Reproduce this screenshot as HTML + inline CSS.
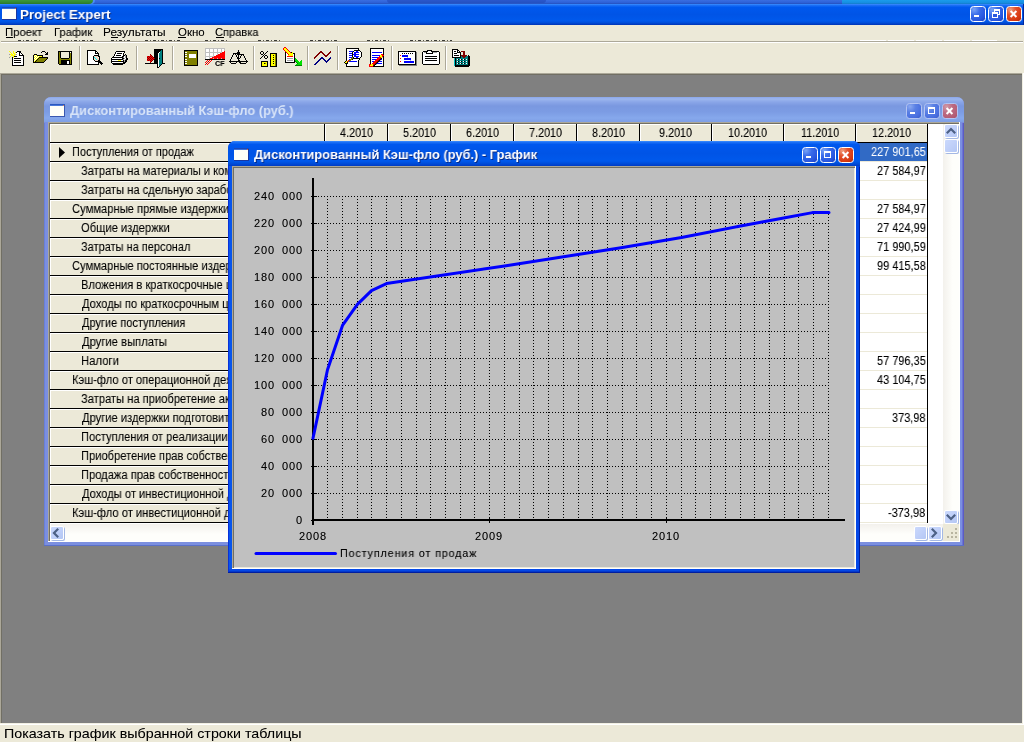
<!DOCTYPE html>
<html lang="ru"><head><meta charset="utf-8"><title>Project Expert</title>
<style>
html,body{margin:0;padding:0;}
body{width:1024px;height:742px;overflow:hidden;background:#ece9d8;position:relative;font-family:"Liberation Sans",sans-serif;font-size:11px;}
body div, body span.t, body svg{position:absolute;}
span.t{white-space:pre;display:block;transform-origin:0 0;will-change:transform;}
</style></head><body>
<div style="left:0px;top:0px;width:1024px;height:4px;background:linear-gradient(#3a6ee0,#2f62d8 60%,#2450bc);"></div>
<div style="left:387px;top:0px;width:159px;height:3px;background:linear-gradient(#2a58cc,#2450c0);border-radius:0 0 3px 3px;"></div>
<div style="left:842px;top:0px;width:182px;height:4px;background:linear-gradient(#1a9cec,#168ee0 70%,#1478c8);"></div>
<div style="left:0px;top:0px;width:95px;height:4px;background:#4a8cf8;border-radius:0 0 5px 0;"></div>
<div style="left:0px;top:0px;width:93px;height:4px;background:linear-gradient(#3c983c,#348c34 50%,#2a782a);border-radius:0 0 5px 0;"></div>
<div style="left:0px;top:4px;width:1024px;height:21px;background:linear-gradient(to bottom,#3d8fff 0%,#1a6ef5 7%,#0058ee 16%,#0054e6 50%,#0059ec 80%,#0050dc 88%,#0040c8 95%,#0034b4 100%);"></div>
<div style="left:1023px;top:4px;width:1px;height:21px;background:#0028a0;"></div>
<svg style="left:2px;top:7px" width="15" height="13" viewBox="0 0 15 13"><rect width="15" height="13" fill="#fffff8"/><rect width="15" height="2" fill="#3a6fd8"/><rect width="15" height="1" fill="#1a48b8"/><rect x="13" y="1" width="1" height="1" fill="#e06030"/><rect y="12" width="15" height="1" fill="#1a38a0"/><rect x="14" y="1" width="1" height="12" fill="#1a38a0"/></svg>
<span class="t" style="left:20.25px;top:6.6px;font-size:13.5px;line-height:16px;color:#fff;font-family:'Liberation Sans',sans-serif;font-weight:bold;transform:scaleX(0.9889);text-shadow:1px 1px 0 #0a2a80;">Project Expert</span>
<div style="left:970px;top:6px;width:14px;height:14px;background:radial-gradient(circle at 22% 18%,#7aa4f6 0%,#3a6cea 35%,#2a58e0 70%,#1c40c4 100%);border:1px solid #fff;border-radius:3.5px;"></div>
<div style="left:974px;top:15px;width:5px;height:2px;background:#fff;"></div>
<div style="left:988px;top:6px;width:14px;height:14px;background:radial-gradient(circle at 22% 18%,#7aa4f6 0%,#3a6cea 35%,#2a58e0 70%,#1c40c4 100%);border:1px solid #fff;border-radius:3.5px;"></div>
<div style="left:994px;top:9px;width:4px;height:3px;background:transparent;border:1px solid #fff;border-top-width:2px;"></div>
<div style="left:992px;top:12px;width:4px;height:3px;background:#2a58e0;border:1px solid #fff;border-top-width:2px;"></div>
<div style="left:1006px;top:6px;width:14px;height:14px;background:radial-gradient(circle at 25% 20%,#f0a080 0%,#e2502a 35%,#d83a12 70%,#b82a08 100%);border:1px solid #fff;border-radius:3.5px;"></div>
<svg style="left:1006px;top:5.5px" width="16" height="16" viewBox="0 0 16 16"><path d="M4.6 5L10.4 11M10.4 5L4.6 11" stroke="#fff" stroke-width="2" stroke-linecap="butt" fill="none"/></svg>
<div style="left:0px;top:25px;width:1024px;height:17px;background:#ece9d8;"></div>
<span class="t" style="left:4.91px;top:25.2px;font-size:11.5px;line-height:14px;color:#000;font-family:'Liberation Sans',sans-serif;text-shadow:0 0 0 rgba(0,0,0,.3);transform:scaleX(0.9838);">Проект</span>
<div style="left:6px;top:37px;width:7px;height:1px;background:#000;"></div>
<span class="t" style="left:54.24px;top:25.2px;font-size:11.5px;line-height:14px;color:#000;font-family:'Liberation Sans',sans-serif;text-shadow:0 0 0 rgba(0,0,0,.3);transform:scaleX(0.9763);">График</span>
<span class="t" style="left:103.44px;top:25.2px;font-size:11.5px;line-height:14px;color:#000;font-family:'Liberation Sans',sans-serif;text-shadow:0 0 0 rgba(0,0,0,.3);transform:scaleX(1.0339);">Результаты</span>
<div style="left:111px;top:37px;width:7px;height:1px;background:#000;"></div>
<span class="t" style="left:177.85px;top:25.2px;font-size:11.5px;line-height:14px;color:#000;font-family:'Liberation Sans',sans-serif;text-shadow:0 0 0 rgba(0,0,0,.3);transform:scaleX(0.9923);">Окно</span>
<div style="left:178px;top:37px;width:8px;height:1px;background:#000;"></div>
<span class="t" style="left:215.04px;top:25.2px;font-size:11.5px;line-height:14px;color:#000;font-family:'Liberation Sans',sans-serif;text-shadow:0 0 0 rgba(0,0,0,.3);transform:scaleX(0.9636);">Справка</span>
<div style="left:216px;top:37px;width:8px;height:1px;background:#000;"></div>
<div style="left:1px;top:41px;width:1022px;height:1px;background:#aca899;"></div>
<div style="left:1px;top:42px;width:1022px;height:1px;background:#fff;"></div>
<div style="left:18px;top:40px;width:23px;height:1px;background:repeating-linear-gradient(90deg,#3a3a36 0,#3a3a36 3px,transparent 3px,transparent 5px,#55534c 5px,#55534c 6px,transparent 6px,transparent 8px);"></div>
<div style="left:58px;top:40px;width:35px;height:1px;background:repeating-linear-gradient(90deg,#3a3a36 0,#3a3a36 3px,transparent 3px,transparent 5px,#55534c 5px,#55534c 6px,transparent 6px,transparent 8px);"></div>
<div style="left:111px;top:40px;width:19px;height:1px;background:repeating-linear-gradient(90deg,#3a3a36 0,#3a3a36 3px,transparent 3px,transparent 5px,#55534c 5px,#55534c 6px,transparent 6px,transparent 8px);"></div>
<div style="left:145px;top:40px;width:35px;height:1px;background:repeating-linear-gradient(90deg,#3a3a36 0,#3a3a36 3px,transparent 3px,transparent 5px,#55534c 5px,#55534c 6px,transparent 6px,transparent 8px);"></div>
<div style="left:205px;top:40px;width:24px;height:1px;background:repeating-linear-gradient(90deg,#3a3a36 0,#3a3a36 3px,transparent 3px,transparent 5px,#55534c 5px,#55534c 6px,transparent 6px,transparent 8px);"></div>
<div style="left:258px;top:40px;width:22px;height:1px;background:repeating-linear-gradient(90deg,#3a3a36 0,#3a3a36 3px,transparent 3px,transparent 5px,#55534c 5px,#55534c 6px,transparent 6px,transparent 8px);"></div>
<div style="left:310px;top:40px;width:27px;height:1px;background:repeating-linear-gradient(90deg,#3a3a36 0,#3a3a36 3px,transparent 3px,transparent 5px,#55534c 5px,#55534c 6px,transparent 6px,transparent 8px);"></div>
<div style="left:367px;top:40px;width:23px;height:1px;background:repeating-linear-gradient(90deg,#3a3a36 0,#3a3a36 3px,transparent 3px,transparent 5px,#55534c 5px,#55534c 6px,transparent 6px,transparent 8px);"></div>
<div style="left:410px;top:40px;width:42px;height:1px;background:repeating-linear-gradient(90deg,#3a3a36 0,#3a3a36 3px,transparent 3px,transparent 5px,#55534c 5px,#55534c 6px,transparent 6px,transparent 8px);"></div>
<div style="left:860px;top:40px;width:137px;height:1px;background:repeating-linear-gradient(90deg,#fff 0,#fff 26px,transparent 26px,transparent 28px);"></div>
<div style="left:0px;top:43px;width:1024px;height:31px;background:#ece9d8;"></div>
<div style="left:0px;top:73px;width:1024px;height:652px;background:#fff;"></div>
<div style="left:0px;top:73px;width:1023px;height:651px;background:#f1efe2;"></div>
<div style="left:0px;top:73px;width:1022px;height:650px;background:#aca899;"></div>
<div style="left:1px;top:74px;width:1021px;height:649px;background:#716f64;"></div>
<div style="left:2px;top:75px;width:1020px;height:648px;background:#808080;"></div>
<div style="left:0px;top:725px;width:1024px;height:17px;background:#ece9d8;"></div>
<span class="t" style="left:3.84px;top:726px;font-size:13.5px;line-height:16px;color:#000;font-family:'Liberation Sans',sans-serif;text-shadow:0 0 0 rgba(0,0,0,.3);transform:scaleX(1.0575);">Показать график выбранной строки таблицы</span>
<div style="left:44px;top:97px;width:920px;height:449px;background:#7b8fe0;border-radius:7px 7px 0 0;"></div>
<div style="left:44px;top:97px;width:920px;height:25px;background:linear-gradient(to bottom,#8aa6ea 0%,#9cb6ee 8%,#8aa6e8 20%,#7a98e0 36%,#7c9ce4 60%,#86a8ec 84%,#7e9ee6 100%);border-radius:7px 7px 0 0;"></div>
<div style="left:44px;top:123px;width:1px;height:423px;background:#6a80d8;"></div>
<div style="left:962px;top:123px;width:1px;height:423px;background:#6c74d4;"></div>
<div style="left:963px;top:123px;width:1px;height:423px;background:#5a5cc4;"></div>
<div style="left:44px;top:545px;width:920px;height:1px;background:#5a70c8;"></div>
<svg style="left:50px;top:104px" width="15" height="13" viewBox="0 0 15 13"><rect width="15" height="13" fill="#fffff8"/><rect width="15" height="2" fill="#4a78d8"/><rect width="15" height="1" fill="#2a58c0"/><rect x="13" y="1" width="1" height="1" fill="#e08050"/><rect y="12" width="15" height="1" fill="#3a58b0"/><rect x="14" y="1" width="1" height="12" fill="#3a58b0"/></svg>
<span class="t" style="left:70.43px;top:103px;font-size:13.5px;line-height:16px;color:#d8e4f8;font-family:'Liberation Sans',sans-serif;font-weight:bold;transform:scaleX(0.9500);">Дисконтированный Кэш-фло (руб.)</span>
<div style="left:906px;top:103px;width:14px;height:14px;background:radial-gradient(circle at 22% 18%,#8aa8f0 0%,#5a80e4 35%,#4a70e0 70%,#3c5ecc 100%);border:1px solid #b4c4f2;border-radius:3.5px;"></div>
<div style="left:910px;top:112px;width:5px;height:2px;background:#fff;"></div>
<div style="left:924px;top:103px;width:14px;height:14px;background:radial-gradient(circle at 22% 18%,#8aa8f0 0%,#5a80e4 35%,#4a70e0 70%,#3c5ecc 100%);border:1px solid #b4c4f2;border-radius:3.5px;"></div>
<div style="left:928px;top:107px;width:5px;height:4px;background:transparent;border:1px solid #fff;border-top-width:2px;"></div>
<div style="left:942px;top:103px;width:14px;height:14px;background:radial-gradient(circle at 25% 20%,#d09aa8 0%,#bc6a82 40%,#b45e76 75%,#a85068 100%);border:1px solid #b4c4f2;border-radius:3.5px;"></div>
<svg style="left:942px;top:102.5px" width="16" height="16" viewBox="0 0 16 16"><path d="M4.6 5L10.4 11M10.4 5L4.6 11" stroke="#fff" stroke-width="2" stroke-linecap="butt" fill="none"/></svg>
<div style="left:48px;top:122px;width:912px;height:420px;background:#fff;"></div>
<div style="left:48px;top:122px;width:911px;height:1px;background:#aca899;"></div>
<div style="left:48px;top:122px;width:1px;height:419px;background:#aca899;"></div>
<div style="left:49px;top:123px;width:910px;height:1px;background:#716f64;"></div>
<div style="left:49px;top:123px;width:1px;height:418px;background:#716f64;"></div>
<div style="left:50px;top:124px;width:878px;height:18px;background:#ece9d8;"></div>
<div style="left:50px;top:124px;width:274px;height:399px;background:#ece9d8;"></div>
<div style="left:50px;top:124px;width:877px;height:1px;background:#fff;"></div>
<div style="left:50px;top:124px;width:1px;height:399px;background:#fff;"></div>
<div style="left:50px;top:142px;width:878px;height:1px;background:#000;"></div>
<div style="left:324px;top:124px;width:1px;height:18px;background:#000;"></div>
<div style="left:325px;top:124px;width:1px;height:18px;background:#fff;"></div>
<div style="left:387px;top:124px;width:1px;height:18px;background:#000;"></div>
<div style="left:388px;top:124px;width:1px;height:18px;background:#fff;"></div>
<div style="left:450px;top:124px;width:1px;height:18px;background:#000;"></div>
<div style="left:451px;top:124px;width:1px;height:18px;background:#fff;"></div>
<div style="left:513px;top:124px;width:1px;height:18px;background:#000;"></div>
<div style="left:514px;top:124px;width:1px;height:18px;background:#fff;"></div>
<div style="left:576px;top:124px;width:1px;height:18px;background:#000;"></div>
<div style="left:577px;top:124px;width:1px;height:18px;background:#fff;"></div>
<div style="left:639px;top:124px;width:1px;height:18px;background:#000;"></div>
<div style="left:640px;top:124px;width:1px;height:18px;background:#fff;"></div>
<div style="left:711px;top:124px;width:1px;height:18px;background:#000;"></div>
<div style="left:712px;top:124px;width:1px;height:18px;background:#fff;"></div>
<div style="left:783px;top:124px;width:1px;height:18px;background:#000;"></div>
<div style="left:784px;top:124px;width:1px;height:18px;background:#fff;"></div>
<div style="left:855px;top:124px;width:1px;height:18px;background:#000;"></div>
<div style="left:856px;top:124px;width:1px;height:18px;background:#fff;"></div>
<div style="left:927px;top:124px;width:1px;height:400px;background:#000;"></div>
<div style="left:324px;top:142px;width:1px;height:382px;background:#000;"></div>
<span class="t" style="left:340px;top:126px;font-size:12.5px;line-height:14px;color:#000;font-family:'Liberation Sans',sans-serif;text-shadow:0 0 0 rgba(0,0,0,.3);transform:scaleX(0.8650);">4.2010</span>
<span class="t" style="left:402.69px;top:126px;font-size:12.5px;line-height:14px;color:#000;font-family:'Liberation Sans',sans-serif;text-shadow:0 0 0 rgba(0,0,0,.3);transform:scaleX(0.8650);">5.2010</span>
<span class="t" style="left:465.69px;top:126px;font-size:12.5px;line-height:14px;color:#000;font-family:'Liberation Sans',sans-serif;text-shadow:0 0 0 rgba(0,0,0,.3);transform:scaleX(0.8650);">6.2010</span>
<span class="t" style="left:528.69px;top:126px;font-size:12.5px;line-height:14px;color:#000;font-family:'Liberation Sans',sans-serif;text-shadow:0 0 0 rgba(0,0,0,.3);transform:scaleX(0.8650);">7.2010</span>
<span class="t" style="left:592.21px;top:126px;font-size:12.5px;line-height:14px;color:#000;font-family:'Liberation Sans',sans-serif;text-shadow:0 0 0 rgba(0,0,0,.3);transform:scaleX(0.8650);">8.2010</span>
<span class="t" style="left:658.98px;top:126px;font-size:12.5px;line-height:14px;color:#000;font-family:'Liberation Sans',sans-serif;text-shadow:0 0 0 rgba(0,0,0,.3);transform:scaleX(0.8650);">9.2010</span>
<span class="t" style="left:727.75px;top:126px;font-size:12.5px;line-height:14px;color:#000;font-family:'Liberation Sans',sans-serif;text-shadow:0 0 0 rgba(0,0,0,.3);transform:scaleX(0.8650);">10.2010</span>
<span class="t" style="left:800.54px;top:126px;font-size:12.5px;line-height:14px;color:#000;font-family:'Liberation Sans',sans-serif;text-shadow:0 0 0 rgba(0,0,0,.3);transform:scaleX(0.8650);">11.2010</span>
<span class="t" style="left:871.75px;top:126px;font-size:12.5px;line-height:14px;color:#000;font-family:'Liberation Sans',sans-serif;text-shadow:0 0 0 rgba(0,0,0,.3);transform:scaleX(0.8650);">12.2010</span>
<div style="left:50px;top:161px;width:274px;height:1px;background:#000;"></div>
<div style="left:50px;top:143px;width:274px;height:1px;background:#fff;"></div>
<div style="left:325px;top:161px;width:602px;height:1px;background:#ece9d8;"></div>
<div style="left:856px;top:143px;width:71px;height:18px;background:#316ac5;"></div>
<svg style="left:59px;top:147px" width="6" height="11" viewBox="0 0 6 11"><path d="M0 0L6 5.5L0 11Z" fill="#000"/></svg>
<span class="t" style="left:71.95px;top:145px;font-size:12.5px;line-height:14px;color:#000;font-family:'Liberation Sans',sans-serif;text-shadow:0 0 0 rgba(0,0,0,.3);transform:scaleX(0.8803);">Поступления от продаж</span>
<span class="t" style="left:870.98px;top:145px;font-size:12.5px;line-height:14px;color:#fff;font-family:'Liberation Sans',sans-serif;transform:scaleX(0.8770);">227 901,65</span>
<div style="left:50px;top:180px;width:274px;height:1px;background:#000;"></div>
<div style="left:50px;top:162px;width:274px;height:1px;background:#fff;"></div>
<div style="left:325px;top:180px;width:602px;height:1px;background:#ece9d8;"></div>
<span class="t" style="left:81.18px;top:164px;font-size:12.5px;line-height:14px;color:#000;font-family:'Liberation Sans',sans-serif;text-shadow:0 0 0 rgba(0,0,0,.3);transform:scaleX(0.8930);">Затраты на материалы и комплектующие</span>
<span class="t" style="left:876.62px;top:164px;font-size:12.5px;line-height:14px;color:#000;font-family:'Liberation Sans',sans-serif;text-shadow:0 0 0 rgba(0,0,0,.3);transform:scaleX(0.8770);">27 584,97</span>
<div style="left:50px;top:199px;width:274px;height:1px;background:#000;"></div>
<div style="left:50px;top:181px;width:274px;height:1px;background:#fff;"></div>
<div style="left:325px;top:199px;width:602px;height:1px;background:#ece9d8;"></div>
<span class="t" style="left:81.18px;top:183px;font-size:12.5px;line-height:14px;color:#000;font-family:'Liberation Sans',sans-serif;text-shadow:0 0 0 rgba(0,0,0,.3);transform:scaleX(0.8930);">Затраты на сдельную заработную плату</span>
<div style="left:50px;top:218px;width:274px;height:1px;background:#000;"></div>
<div style="left:50px;top:200px;width:274px;height:1px;background:#fff;"></div>
<div style="left:325px;top:218px;width:602px;height:1px;background:#ece9d8;"></div>
<span class="t" style="left:71.52px;top:202px;font-size:12.5px;line-height:14px;color:#000;font-family:'Liberation Sans',sans-serif;text-shadow:0 0 0 rgba(0,0,0,.3);transform:scaleX(0.8971);">Суммарные прямые издержки</span>
<span class="t" style="left:876.62px;top:202px;font-size:12.5px;line-height:14px;color:#000;font-family:'Liberation Sans',sans-serif;text-shadow:0 0 0 rgba(0,0,0,.3);transform:scaleX(0.8770);">27 584,97</span>
<div style="left:50px;top:237px;width:274px;height:1px;background:#000;"></div>
<div style="left:50px;top:219px;width:274px;height:1px;background:#fff;"></div>
<div style="left:325px;top:237px;width:602px;height:1px;background:#ece9d8;"></div>
<span class="t" style="left:81.16px;top:221px;font-size:12.5px;line-height:14px;color:#000;font-family:'Liberation Sans',sans-serif;text-shadow:0 0 0 rgba(0,0,0,.3);transform:scaleX(0.8969);">Общие издержки</span>
<span class="t" style="left:876.62px;top:221px;font-size:12.5px;line-height:14px;color:#000;font-family:'Liberation Sans',sans-serif;text-shadow:0 0 0 rgba(0,0,0,.3);transform:scaleX(0.8770);">27 424,99</span>
<div style="left:50px;top:256px;width:274px;height:1px;background:#000;"></div>
<div style="left:50px;top:238px;width:274px;height:1px;background:#fff;"></div>
<div style="left:325px;top:256px;width:602px;height:1px;background:#ece9d8;"></div>
<span class="t" style="left:81.25px;top:240px;font-size:12.5px;line-height:14px;color:#000;font-family:'Liberation Sans',sans-serif;text-shadow:0 0 0 rgba(0,0,0,.3);transform:scaleX(0.8805);">Затраты на персонал</span>
<span class="t" style="left:876.62px;top:240px;font-size:12.5px;line-height:14px;color:#000;font-family:'Liberation Sans',sans-serif;text-shadow:0 0 0 rgba(0,0,0,.3);transform:scaleX(0.8770);">71 990,59</span>
<div style="left:50px;top:275px;width:274px;height:1px;background:#000;"></div>
<div style="left:50px;top:257px;width:274px;height:1px;background:#fff;"></div>
<div style="left:325px;top:275px;width:602px;height:1px;background:#ece9d8;"></div>
<span class="t" style="left:71.54px;top:259px;font-size:12.5px;line-height:14px;color:#000;font-family:'Liberation Sans',sans-serif;text-shadow:0 0 0 rgba(0,0,0,.3);transform:scaleX(0.8930);">Суммарные постоянные издержки</span>
<span class="t" style="left:876.62px;top:259px;font-size:12.5px;line-height:14px;color:#000;font-family:'Liberation Sans',sans-serif;text-shadow:0 0 0 rgba(0,0,0,.3);transform:scaleX(0.8770);">99 415,58</span>
<div style="left:50px;top:294px;width:274px;height:1px;background:#000;"></div>
<div style="left:50px;top:276px;width:274px;height:1px;background:#fff;"></div>
<div style="left:325px;top:294px;width:602px;height:1px;background:#ece9d8;"></div>
<span class="t" style="left:81.18px;top:278px;font-size:12.5px;line-height:14px;color:#000;font-family:'Liberation Sans',sans-serif;text-shadow:0 0 0 rgba(0,0,0,.3);transform:scaleX(0.8930);">Вложения в краткосрочные ценные бумаги</span>
<div style="left:50px;top:313px;width:274px;height:1px;background:#000;"></div>
<div style="left:50px;top:295px;width:274px;height:1px;background:#fff;"></div>
<div style="left:325px;top:313px;width:602px;height:1px;background:#ece9d8;"></div>
<span class="t" style="left:82.41px;top:297px;font-size:12.5px;line-height:14px;color:#000;font-family:'Liberation Sans',sans-serif;text-shadow:0 0 0 rgba(0,0,0,.3);transform:scaleX(0.8930);">Доходы по краткосрочным ценным бумагам</span>
<div style="left:50px;top:332px;width:274px;height:1px;background:#000;"></div>
<div style="left:50px;top:314px;width:274px;height:1px;background:#fff;"></div>
<div style="left:325px;top:332px;width:602px;height:1px;background:#ece9d8;"></div>
<span class="t" style="left:82.41px;top:316px;font-size:12.5px;line-height:14px;color:#000;font-family:'Liberation Sans',sans-serif;text-shadow:0 0 0 rgba(0,0,0,.3);transform:scaleX(0.8812);">Другие поступления</span>
<div style="left:50px;top:351px;width:274px;height:1px;background:#000;"></div>
<div style="left:50px;top:333px;width:274px;height:1px;background:#fff;"></div>
<div style="left:325px;top:351px;width:602px;height:1px;background:#ece9d8;"></div>
<span class="t" style="left:82.42px;top:335px;font-size:12.5px;line-height:14px;color:#000;font-family:'Liberation Sans',sans-serif;text-shadow:0 0 0 rgba(0,0,0,.3);transform:scaleX(0.8979);">Другие выплаты</span>
<div style="left:50px;top:370px;width:274px;height:1px;background:#000;"></div>
<div style="left:50px;top:352px;width:274px;height:1px;background:#fff;"></div>
<div style="left:325px;top:370px;width:602px;height:1px;background:#ece9d8;"></div>
<span class="t" style="left:81.01px;top:354px;font-size:12.5px;line-height:14px;color:#000;font-family:'Liberation Sans',sans-serif;text-shadow:0 0 0 rgba(0,0,0,.3);transform:scaleX(0.9050);">Налоги</span>
<span class="t" style="left:876.62px;top:354px;font-size:12.5px;line-height:14px;color:#000;font-family:'Liberation Sans',sans-serif;text-shadow:0 0 0 rgba(0,0,0,.3);transform:scaleX(0.8770);">57 796,35</span>
<div style="left:50px;top:389px;width:274px;height:1px;background:#000;"></div>
<div style="left:50px;top:371px;width:274px;height:1px;background:#fff;"></div>
<div style="left:325px;top:389px;width:602px;height:1px;background:#ece9d8;"></div>
<span class="t" style="left:71.79px;top:373px;font-size:12.5px;line-height:14px;color:#000;font-family:'Liberation Sans',sans-serif;text-shadow:0 0 0 rgba(0,0,0,.3);transform:scaleX(0.8930);">Кэш-фло от операционной деятельности</span>
<span class="t" style="left:876.62px;top:373px;font-size:12.5px;line-height:14px;color:#000;font-family:'Liberation Sans',sans-serif;text-shadow:0 0 0 rgba(0,0,0,.3);transform:scaleX(0.8770);">43 104,75</span>
<div style="left:50px;top:408px;width:274px;height:1px;background:#000;"></div>
<div style="left:50px;top:390px;width:274px;height:1px;background:#fff;"></div>
<div style="left:325px;top:408px;width:602px;height:1px;background:#ece9d8;"></div>
<span class="t" style="left:81.18px;top:392px;font-size:12.5px;line-height:14px;color:#000;font-family:'Liberation Sans',sans-serif;text-shadow:0 0 0 rgba(0,0,0,.3);transform:scaleX(0.8930);">Затраты на приобретение активов</span>
<div style="left:50px;top:427px;width:274px;height:1px;background:#000;"></div>
<div style="left:50px;top:409px;width:274px;height:1px;background:#fff;"></div>
<div style="left:325px;top:427px;width:602px;height:1px;background:#ece9d8;"></div>
<span class="t" style="left:82.41px;top:411px;font-size:12.5px;line-height:14px;color:#000;font-family:'Liberation Sans',sans-serif;text-shadow:0 0 0 rgba(0,0,0,.3);transform:scaleX(0.8930);">Другие издержки подготовительного периода</span>
<span class="t" style="left:891.85px;top:411px;font-size:12.5px;line-height:14px;color:#000;font-family:'Liberation Sans',sans-serif;text-shadow:0 0 0 rgba(0,0,0,.3);transform:scaleX(0.8770);">373,98</span>
<div style="left:50px;top:446px;width:274px;height:1px;background:#000;"></div>
<div style="left:50px;top:428px;width:274px;height:1px;background:#fff;"></div>
<div style="left:325px;top:446px;width:602px;height:1px;background:#ece9d8;"></div>
<span class="t" style="left:81.18px;top:430px;font-size:12.5px;line-height:14px;color:#000;font-family:'Liberation Sans',sans-serif;text-shadow:0 0 0 rgba(0,0,0,.3);transform:scaleX(0.8930);">Поступления от реализации активов</span>
<div style="left:50px;top:465px;width:274px;height:1px;background:#000;"></div>
<div style="left:50px;top:447px;width:274px;height:1px;background:#fff;"></div>
<div style="left:325px;top:465px;width:602px;height:1px;background:#ece9d8;"></div>
<span class="t" style="left:81.18px;top:449px;font-size:12.5px;line-height:14px;color:#000;font-family:'Liberation Sans',sans-serif;text-shadow:0 0 0 rgba(0,0,0,.3);transform:scaleX(0.8930);">Приобретение прав собственности (акций)</span>
<div style="left:50px;top:484px;width:274px;height:1px;background:#000;"></div>
<div style="left:50px;top:466px;width:274px;height:1px;background:#fff;"></div>
<div style="left:325px;top:484px;width:602px;height:1px;background:#ece9d8;"></div>
<span class="t" style="left:81.18px;top:468px;font-size:12.5px;line-height:14px;color:#000;font-family:'Liberation Sans',sans-serif;text-shadow:0 0 0 rgba(0,0,0,.3);transform:scaleX(0.8930);">Продажа прав собственности (акций)</span>
<div style="left:50px;top:503px;width:274px;height:1px;background:#000;"></div>
<div style="left:50px;top:485px;width:274px;height:1px;background:#fff;"></div>
<div style="left:325px;top:503px;width:602px;height:1px;background:#ece9d8;"></div>
<span class="t" style="left:82.41px;top:487px;font-size:12.5px;line-height:14px;color:#000;font-family:'Liberation Sans',sans-serif;text-shadow:0 0 0 rgba(0,0,0,.3);transform:scaleX(0.8930);">Доходы от инвестиционной деятельности</span>
<div style="left:50px;top:522px;width:274px;height:1px;background:#000;"></div>
<div style="left:50px;top:504px;width:274px;height:1px;background:#fff;"></div>
<div style="left:325px;top:522px;width:602px;height:1px;background:#ece9d8;"></div>
<span class="t" style="left:71.79px;top:506px;font-size:12.5px;line-height:14px;color:#000;font-family:'Liberation Sans',sans-serif;text-shadow:0 0 0 rgba(0,0,0,.3);transform:scaleX(0.8930);">Кэш-фло от инвестиционной деятельности</span>
<span class="t" style="left:888.13px;top:506px;font-size:12.5px;line-height:14px;color:#000;font-family:'Liberation Sans',sans-serif;text-shadow:0 0 0 rgba(0,0,0,.3);transform:scaleX(0.8770);">-373,98</span>
<div style="left:943px;top:124px;width:16px;height:400px;background:linear-gradient(to right,#f3f1ec,#fefefb 60%);"></div>
<div style="left:944px;top:124px;width:12px;height:12px;background:linear-gradient(135deg,#cbd9fc 0%,#c0d0f9 50%,#b4c7f4 100%);border:1px solid #fff;border-radius:2px;box-shadow:1px 1px 0 #a4b8e4;"></div>
<svg style="left:946px;top:127px" width="10" height="8" viewBox="0 0 10 8"><path d="M0.8 6.2L5 2L9.2 6.2" stroke="#4d6185" stroke-width="2.2" fill="none"/></svg>
<div style="left:944px;top:139px;width:12px;height:12px;background:linear-gradient(135deg,#cbd9fc 0%,#c0d0f9 50%,#b4c7f4 100%);border:1px solid #fff;border-radius:2px;box-shadow:1px 1px 0 #a4b8e4;"></div>
<div style="left:944px;top:510px;width:12px;height:12px;background:linear-gradient(135deg,#cbd9fc 0%,#c0d0f9 50%,#b4c7f4 100%);border:1px solid #fff;border-radius:2px;box-shadow:1px 1px 0 #a4b8e4;"></div>
<svg style="left:946px;top:513px" width="10" height="8" viewBox="0 0 10 8"><path d="M0.8 1.8L5 6L9.2 1.8" stroke="#4d6185" stroke-width="2.2" fill="none"/></svg>
<div style="left:51px;top:524px;width:892px;height:17px;background:linear-gradient(to bottom,#f3f1ec,#fefefb 60%);"></div>
<div style="left:50px;top:523px;width:893px;height:1px;background:#fff;"></div>
<div style="left:50px;top:526px;width:12px;height:12px;background:linear-gradient(135deg,#cbd9fc 0%,#c0d0f9 50%,#b4c7f4 100%);border:1px solid #fff;border-radius:2px;box-shadow:1px 1px 0 #a4b8e4;"></div>
<svg style="left:52.3px;top:527.6px" width="8" height="10" viewBox="0 0 8 10"><path d="M6.2 0.8L2 5L6.2 9.2" stroke="#4d6185" stroke-width="2.2" fill="none"/></svg>
<div style="left:914px;top:526px;width:11px;height:12px;background:linear-gradient(135deg,#cbd9fc 0%,#c0d0f9 50%,#b4c7f4 100%);border:1px solid #fff;border-radius:2px;box-shadow:1px 1px 0 #a4b8e4;"></div>
<div style="left:928px;top:526px;width:12px;height:12px;background:linear-gradient(135deg,#cbd9fc 0%,#c0d0f9 50%,#b4c7f4 100%);border:1px solid #fff;border-radius:2px;box-shadow:1px 1px 0 #a4b8e4;"></div>
<svg style="left:930.3px;top:527.6px" width="8" height="10" viewBox="0 0 8 10"><path d="M1.8 0.8L6 5L1.8 9.2" stroke="#4d6185" stroke-width="2.2" fill="none"/></svg>
<div style="left:943px;top:524px;width:16px;height:17px;background:#ece9d8;"></div>
<svg style="left:946px;top:527px" width="13" height="13" viewBox="0 0 13 13"><g fill="#b8b4a0"><rect x="9" y="1" width="2" height="2"/><rect x="5" y="5" width="2" height="2"/><rect x="9" y="5" width="2" height="2"/><rect x="1" y="9" width="2" height="2"/><rect x="5" y="9" width="2" height="2"/><rect x="9" y="9" width="2" height="2"/></g></svg>
<div style="left:228px;top:141px;width:632px;height:432px;background:#0831d9;border-radius:7px 7px 0 0;"></div>
<div style="left:228px;top:141px;width:632px;height:25px;background:linear-gradient(to bottom,#3d8fff 0%,#1a6ef5 6%,#0058ee 14%,#0054e6 50%,#0059ec 80%,#0050dc 88%,#0044d0 95%,#003cc4 100%);border-radius:7px 7px 0 0;"></div>
<div style="left:229px;top:166px;width:3px;height:404px;background:#0855ec;"></div>
<div style="left:856px;top:166px;width:3px;height:404px;background:#0448e6;"></div>
<div style="left:229px;top:569px;width:630px;height:3px;background:linear-gradient(#0448e6,#0448e6 50%,#0030c0);"></div>
<div style="left:228px;top:572px;width:632px;height:1px;background:#001ea0;"></div>
<div style="left:859px;top:167px;width:1px;height:406px;background:#001ea0;"></div>
<svg style="left:234px;top:148px" width="15" height="13" viewBox="0 0 15 13"><rect width="15" height="13" fill="#fffff8"/><rect width="15" height="2" fill="#3a6fd8"/><rect width="15" height="1" fill="#1a48b8"/><rect x="13" y="1" width="1" height="1" fill="#e06030"/><rect y="12" width="15" height="1" fill="#1a38a0"/><rect x="14" y="1" width="1" height="12" fill="#1a38a0"/></svg>
<span class="t" style="left:253.74px;top:147px;font-size:13.5px;line-height:16px;color:#fff;font-family:'Liberation Sans',sans-serif;font-weight:bold;transform:scaleX(0.9532);text-shadow:1px 1px 0 #0a2a80;">Дисконтированный Кэш-фло (руб.) - График</span>
<div style="left:802px;top:147px;width:14px;height:14px;background:radial-gradient(circle at 22% 18%,#7aa4f6 0%,#3a6cea 35%,#2a58e0 70%,#1c40c4 100%);border:1px solid #fff;border-radius:3.5px;"></div>
<div style="left:806px;top:156px;width:5px;height:2px;background:#fff;"></div>
<div style="left:820px;top:147px;width:14px;height:14px;background:radial-gradient(circle at 22% 18%,#7aa4f6 0%,#3a6cea 35%,#2a58e0 70%,#1c40c4 100%);border:1px solid #fff;border-radius:3.5px;"></div>
<div style="left:824px;top:151px;width:5px;height:4px;background:transparent;border:1px solid #fff;border-top-width:2px;"></div>
<div style="left:838px;top:147px;width:14px;height:14px;background:radial-gradient(circle at 25% 20%,#f0a080 0%,#e2502a 35%,#d83a12 70%,#b82a08 100%);border:1px solid #fff;border-radius:3.5px;"></div>
<svg style="left:838px;top:146.5px" width="16" height="16" viewBox="0 0 16 16"><path d="M4.6 5L10.4 11M10.4 5L4.6 11" stroke="#fff" stroke-width="2" stroke-linecap="butt" fill="none"/></svg>
<div style="left:232px;top:166px;width:624px;height:403px;background:#fff;"></div>
<div style="left:232px;top:166px;width:623px;height:1px;background:#aca899;"></div>
<div style="left:232px;top:166px;width:1px;height:402px;background:#aca899;"></div>
<div style="left:233px;top:167px;width:622px;height:1px;background:#716f64;"></div>
<div style="left:233px;top:167px;width:1px;height:401px;background:#716f64;"></div>
<div style="left:234px;top:168px;width:621px;height:400px;background:#ece9d8;"></div>
<div style="left:234px;top:168px;width:620px;height:399px;background:#c0c0c0;"></div>
<svg style="left:232px;top:166px" width="624" height="402" viewBox="232 166 624 402" shape-rendering="crispEdges"><line x1="315" y1="196.5" x2="829" y2="196.5" stroke="#000" stroke-width="1" stroke-dasharray="1 2"/><line x1="315" y1="223.5" x2="829" y2="223.5" stroke="#000" stroke-width="1" stroke-dasharray="1 2"/><line x1="315" y1="250.5" x2="829" y2="250.5" stroke="#000" stroke-width="1" stroke-dasharray="1 2"/><line x1="315" y1="277.5" x2="829" y2="277.5" stroke="#000" stroke-width="1" stroke-dasharray="1 2"/><line x1="315" y1="304.5" x2="829" y2="304.5" stroke="#000" stroke-width="1" stroke-dasharray="1 2"/><line x1="315" y1="331.5" x2="829" y2="331.5" stroke="#000" stroke-width="1" stroke-dasharray="1 2"/><line x1="315" y1="358.5" x2="829" y2="358.5" stroke="#000" stroke-width="1" stroke-dasharray="1 2"/><line x1="315" y1="385.5" x2="829" y2="385.5" stroke="#000" stroke-width="1" stroke-dasharray="1 2"/><line x1="315" y1="412.5" x2="829" y2="412.5" stroke="#000" stroke-width="1" stroke-dasharray="1 2"/><line x1="315" y1="439.5" x2="829" y2="439.5" stroke="#000" stroke-width="1" stroke-dasharray="1 2"/><line x1="315" y1="466.5" x2="829" y2="466.5" stroke="#000" stroke-width="1" stroke-dasharray="1 2"/><line x1="315" y1="493.5" x2="829" y2="493.5" stroke="#000" stroke-width="1" stroke-dasharray="1 2"/><line x1="327.5" y1="196" x2="327.5" y2="519" stroke="#000" stroke-width="1" stroke-dasharray="1 2"/><line x1="342.5" y1="196" x2="342.5" y2="519" stroke="#000" stroke-width="1" stroke-dasharray="1 2"/><line x1="357.5" y1="196" x2="357.5" y2="519" stroke="#000" stroke-width="1" stroke-dasharray="1 2"/><line x1="371.5" y1="196" x2="371.5" y2="519" stroke="#000" stroke-width="1" stroke-dasharray="1 2"/><line x1="386.5" y1="196" x2="386.5" y2="519" stroke="#000" stroke-width="1" stroke-dasharray="1 2"/><line x1="401.5" y1="196" x2="401.5" y2="519" stroke="#000" stroke-width="1" stroke-dasharray="1 2"/><line x1="416.5" y1="196" x2="416.5" y2="519" stroke="#000" stroke-width="1" stroke-dasharray="1 2"/><line x1="430.5" y1="196" x2="430.5" y2="519" stroke="#000" stroke-width="1" stroke-dasharray="1 2"/><line x1="445.5" y1="196" x2="445.5" y2="519" stroke="#000" stroke-width="1" stroke-dasharray="1 2"/><line x1="460.5" y1="196" x2="460.5" y2="519" stroke="#000" stroke-width="1" stroke-dasharray="1 2"/><line x1="474.5" y1="196" x2="474.5" y2="519" stroke="#000" stroke-width="1" stroke-dasharray="1 2"/><line x1="489.5" y1="196" x2="489.5" y2="519" stroke="#000" stroke-width="1" stroke-dasharray="1 2"/><line x1="504.5" y1="196" x2="504.5" y2="519" stroke="#000" stroke-width="1" stroke-dasharray="1 2"/><line x1="519.5" y1="196" x2="519.5" y2="519" stroke="#000" stroke-width="1" stroke-dasharray="1 2"/><line x1="533.5" y1="196" x2="533.5" y2="519" stroke="#000" stroke-width="1" stroke-dasharray="1 2"/><line x1="548.5" y1="196" x2="548.5" y2="519" stroke="#000" stroke-width="1" stroke-dasharray="1 2"/><line x1="563.5" y1="196" x2="563.5" y2="519" stroke="#000" stroke-width="1" stroke-dasharray="1 2"/><line x1="578.5" y1="196" x2="578.5" y2="519" stroke="#000" stroke-width="1" stroke-dasharray="1 2"/><line x1="592.5" y1="196" x2="592.5" y2="519" stroke="#000" stroke-width="1" stroke-dasharray="1 2"/><line x1="607.5" y1="196" x2="607.5" y2="519" stroke="#000" stroke-width="1" stroke-dasharray="1 2"/><line x1="622.5" y1="196" x2="622.5" y2="519" stroke="#000" stroke-width="1" stroke-dasharray="1 2"/><line x1="636.5" y1="196" x2="636.5" y2="519" stroke="#000" stroke-width="1" stroke-dasharray="1 2"/><line x1="651.5" y1="196" x2="651.5" y2="519" stroke="#000" stroke-width="1" stroke-dasharray="1 2"/><line x1="666.5" y1="196" x2="666.5" y2="519" stroke="#000" stroke-width="1" stroke-dasharray="1 2"/><line x1="681.5" y1="196" x2="681.5" y2="519" stroke="#000" stroke-width="1" stroke-dasharray="1 2"/><line x1="695.5" y1="196" x2="695.5" y2="519" stroke="#000" stroke-width="1" stroke-dasharray="1 2"/><line x1="710.5" y1="196" x2="710.5" y2="519" stroke="#000" stroke-width="1" stroke-dasharray="1 2"/><line x1="725.5" y1="196" x2="725.5" y2="519" stroke="#000" stroke-width="1" stroke-dasharray="1 2"/><line x1="740.5" y1="196" x2="740.5" y2="519" stroke="#000" stroke-width="1" stroke-dasharray="1 2"/><line x1="754.5" y1="196" x2="754.5" y2="519" stroke="#000" stroke-width="1" stroke-dasharray="1 2"/><line x1="769.5" y1="196" x2="769.5" y2="519" stroke="#000" stroke-width="1" stroke-dasharray="1 2"/><line x1="784.5" y1="196" x2="784.5" y2="519" stroke="#000" stroke-width="1" stroke-dasharray="1 2"/><line x1="798.5" y1="196" x2="798.5" y2="519" stroke="#000" stroke-width="1" stroke-dasharray="1 2"/><line x1="813.5" y1="196" x2="813.5" y2="519" stroke="#000" stroke-width="1" stroke-dasharray="1 2"/><line x1="828.5" y1="196" x2="828.5" y2="519" stroke="#000" stroke-width="1" stroke-dasharray="1 2"/><rect x="312" y="178" width="2" height="347" fill="#000"/><rect x="312" y="519" width="533" height="2" fill="#000"/><rect x="311" y="196" width="6" height="1" fill="#000"/><rect x="311" y="223" width="6" height="1" fill="#000"/><rect x="311" y="250" width="6" height="1" fill="#000"/><rect x="311" y="277" width="6" height="1" fill="#000"/><rect x="311" y="304" width="6" height="1" fill="#000"/><rect x="311" y="331" width="6" height="1" fill="#000"/><rect x="311" y="358" width="6" height="1" fill="#000"/><rect x="311" y="385" width="6" height="1" fill="#000"/><rect x="311" y="412" width="6" height="1" fill="#000"/><rect x="311" y="439" width="6" height="1" fill="#000"/><rect x="311" y="466" width="6" height="1" fill="#000"/><rect x="311" y="493" width="6" height="1" fill="#000"/><rect x="311" y="520" width="6" height="1" fill="#000"/><rect x="489" y="517" width="1" height="6" fill="#000"/><rect x="666" y="517" width="1" height="6" fill="#000"/><polyline shape-rendering="auto" points="313,438.3 327.5,369.7 342.5,325.4 357.4,304.4 371.5,290.7 386.5,283.6 504.5,266 622.5,247.5 681.5,237.5 740.5,226 785,217.8 812.5,212.6 829,212.6" fill="none" stroke="#0000ff" stroke-width="3" stroke-linejoin="round" stroke-linecap="round"/><line shape-rendering="auto" x1="256" y1="553.5" x2="335.5" y2="553.5" stroke="#0000ff" stroke-width="3" stroke-linecap="round"/></svg>
<span class="t" style="left:254px;top:189px;font-size:11px;line-height:14px;color:#000;font-family:'Liberation Sans',sans-serif;text-shadow:0 0 0 rgba(0,0,0,.3);letter-spacing:0.9px;word-spacing:3px;">240 000</span>
<span class="t" style="left:254px;top:216px;font-size:11px;line-height:14px;color:#000;font-family:'Liberation Sans',sans-serif;text-shadow:0 0 0 rgba(0,0,0,.3);letter-spacing:0.9px;word-spacing:3px;">220 000</span>
<span class="t" style="left:254px;top:243px;font-size:11px;line-height:14px;color:#000;font-family:'Liberation Sans',sans-serif;text-shadow:0 0 0 rgba(0,0,0,.3);letter-spacing:0.9px;word-spacing:3px;">200 000</span>
<span class="t" style="left:254px;top:270px;font-size:11px;line-height:14px;color:#000;font-family:'Liberation Sans',sans-serif;text-shadow:0 0 0 rgba(0,0,0,.3);letter-spacing:0.9px;word-spacing:3px;">180 000</span>
<span class="t" style="left:254px;top:297px;font-size:11px;line-height:14px;color:#000;font-family:'Liberation Sans',sans-serif;text-shadow:0 0 0 rgba(0,0,0,.3);letter-spacing:0.9px;word-spacing:3px;">160 000</span>
<span class="t" style="left:254px;top:324px;font-size:11px;line-height:14px;color:#000;font-family:'Liberation Sans',sans-serif;text-shadow:0 0 0 rgba(0,0,0,.3);letter-spacing:0.9px;word-spacing:3px;">140 000</span>
<span class="t" style="left:254px;top:351px;font-size:11px;line-height:14px;color:#000;font-family:'Liberation Sans',sans-serif;text-shadow:0 0 0 rgba(0,0,0,.3);letter-spacing:0.9px;word-spacing:3px;">120 000</span>
<span class="t" style="left:254px;top:378px;font-size:11px;line-height:14px;color:#000;font-family:'Liberation Sans',sans-serif;text-shadow:0 0 0 rgba(0,0,0,.3);letter-spacing:0.9px;word-spacing:3px;">100 000</span>
<span class="t" style="left:261px;top:405px;font-size:11px;line-height:14px;color:#000;font-family:'Liberation Sans',sans-serif;text-shadow:0 0 0 rgba(0,0,0,.3);letter-spacing:0.9px;word-spacing:3px;">80 000</span>
<span class="t" style="left:261px;top:432px;font-size:11px;line-height:14px;color:#000;font-family:'Liberation Sans',sans-serif;text-shadow:0 0 0 rgba(0,0,0,.3);letter-spacing:0.9px;word-spacing:3px;">60 000</span>
<span class="t" style="left:261px;top:459px;font-size:11px;line-height:14px;color:#000;font-family:'Liberation Sans',sans-serif;text-shadow:0 0 0 rgba(0,0,0,.3);letter-spacing:0.9px;word-spacing:3px;">40 000</span>
<span class="t" style="left:261px;top:486px;font-size:11px;line-height:14px;color:#000;font-family:'Liberation Sans',sans-serif;text-shadow:0 0 0 rgba(0,0,0,.3);letter-spacing:0.9px;word-spacing:3px;">20 000</span>
<span class="t" style="left:296px;top:513px;font-size:11px;line-height:14px;color:#000;font-family:'Liberation Sans',sans-serif;text-shadow:0 0 0 rgba(0,0,0,.3);letter-spacing:0.9px;word-spacing:3px;">0</span>
<span class="t" style="left:298.98px;top:529px;font-size:11px;line-height:14px;color:#000;font-family:'Liberation Sans',sans-serif;text-shadow:0 0 0 rgba(0,0,0,.3);letter-spacing:0.9px;">2008</span>
<span class="t" style="left:474.98px;top:529px;font-size:11px;line-height:14px;color:#000;font-family:'Liberation Sans',sans-serif;text-shadow:0 0 0 rgba(0,0,0,.3);letter-spacing:0.9px;">2009</span>
<span class="t" style="left:651.98px;top:529px;font-size:11px;line-height:14px;color:#000;font-family:'Liberation Sans',sans-serif;text-shadow:0 0 0 rgba(0,0,0,.3);letter-spacing:0.9px;">2010</span>
<span class="t" style="left:340.23px;top:546px;font-size:11px;line-height:14px;color:#000;font-family:'Liberation Sans',sans-serif;text-shadow:0 0 0 rgba(0,0,0,.3);transform:scaleX(0.9764);letter-spacing:0.9px;">Поступления от продаж</span>
<svg style="left:9px;top:51px" width="16" height="15" viewBox="0 0 16 15" shape-rendering="crispEdges"><rect x="0" y="0" width="1" height="1" fill="#ffff00"/><rect x="4" y="0" width="1" height="1" fill="#ffff00"/><rect x="8" y="0" width="4" height="1" fill="#000"/><rect x="1" y="1" width="1" height="1" fill="#ffff00"/><rect x="4" y="1" width="1" height="1" fill="#ffff00"/><rect x="6" y="1" width="1" height="1" fill="#ffff00"/><rect x="7" y="1" width="1" height="1" fill="#000"/><rect x="8" y="1" width="2" height="1" fill="#fff"/><rect x="10" y="1" width="2" height="1" fill="#000"/><rect x="2" y="2" width="1" height="1" fill="#ffff00"/><rect x="4" y="2" width="2" height="1" fill="#ffff00"/><rect x="7" y="2" width="3" height="1" fill="#fff"/><rect x="10" y="2" width="1" height="1" fill="#000"/><rect x="11" y="2" width="1" height="1" fill="#fff"/><rect x="12" y="2" width="1" height="1" fill="#000"/><rect x="0" y="3" width="1" height="1" fill="#a0a0a0"/><rect x="1" y="3" width="3" height="1" fill="#ffff00"/><rect x="5" y="3" width="2" height="1" fill="#ffff00"/><rect x="7" y="3" width="1" height="1" fill="#a0a0a0"/><rect x="8" y="3" width="2" height="1" fill="#fff"/><rect x="10" y="3" width="1" height="1" fill="#000"/><rect x="11" y="3" width="2" height="1" fill="#fff"/><rect x="13" y="3" width="1" height="1" fill="#000"/><rect x="2" y="4" width="4" height="1" fill="#ffff00"/><rect x="7" y="4" width="3" height="1" fill="#fff"/><rect x="10" y="4" width="5" height="1" fill="#000"/><rect x="1" y="5" width="1" height="1" fill="#ffff00"/><rect x="4" y="5" width="1" height="1" fill="#ffff00"/><rect x="5" y="5" width="3" height="1" fill="#000"/><rect x="8" y="5" width="6" height="1" fill="#fff"/><rect x="14" y="5" width="1" height="1" fill="#000"/><rect x="0" y="6" width="1" height="1" fill="#a0a0a0"/><rect x="3" y="6" width="1" height="1" fill="#000"/><rect x="4" y="6" width="1" height="1" fill="#ffff00"/><rect x="5" y="6" width="9" height="1" fill="#fff"/><rect x="14" y="6" width="1" height="1" fill="#000"/><rect x="3" y="7" width="1" height="1" fill="#000"/><rect x="4" y="7" width="1" height="1" fill="#fff"/><rect x="5" y="7" width="7" height="1" fill="#000"/><rect x="12" y="7" width="2" height="1" fill="#fff"/><rect x="14" y="7" width="1" height="1" fill="#000"/><rect x="3" y="8" width="1" height="1" fill="#000"/><rect x="4" y="8" width="10" height="1" fill="#fff"/><rect x="14" y="8" width="1" height="1" fill="#000"/><rect x="3" y="9" width="1" height="1" fill="#000"/><rect x="4" y="9" width="1" height="1" fill="#fff"/><rect x="5" y="9" width="7" height="1" fill="#000"/><rect x="12" y="9" width="2" height="1" fill="#fff"/><rect x="14" y="9" width="1" height="1" fill="#000"/><rect x="3" y="10" width="1" height="1" fill="#000"/><rect x="4" y="10" width="10" height="1" fill="#fff"/><rect x="14" y="10" width="1" height="1" fill="#000"/><rect x="3" y="11" width="1" height="1" fill="#000"/><rect x="4" y="11" width="1" height="1" fill="#fff"/><rect x="5" y="11" width="7" height="1" fill="#000"/><rect x="12" y="11" width="2" height="1" fill="#fff"/><rect x="14" y="11" width="1" height="1" fill="#000"/><rect x="3" y="12" width="1" height="1" fill="#000"/><rect x="4" y="12" width="10" height="1" fill="#fff"/><rect x="14" y="12" width="1" height="1" fill="#000"/><rect x="3" y="13" width="1" height="1" fill="#000"/><rect x="4" y="13" width="10" height="1" fill="#fff"/><rect x="14" y="13" width="1" height="1" fill="#000"/><rect x="3" y="14" width="12" height="1" fill="#000"/></svg>
<svg style="left:33px;top:50px" width="16" height="13" viewBox="0 0 16 13" shape-rendering="crispEdges"><rect x="9" y="1" width="3" height="1" fill="#000"/><rect x="8" y="2" width="1" height="1" fill="#000"/><rect x="12" y="2" width="1" height="1" fill="#000"/><rect x="14" y="2" width="1" height="1" fill="#000"/><rect x="13" y="3" width="2" height="1" fill="#000"/><rect x="1" y="4" width="3" height="1" fill="#000"/><rect x="12" y="4" width="3" height="1" fill="#000"/><rect x="0" y="5" width="1" height="1" fill="#000"/><rect x="1" y="5" width="1" height="1" fill="#ffff00"/><rect x="2" y="5" width="1" height="1" fill="#fff"/><rect x="3" y="5" width="1" height="1" fill="#ffff00"/><rect x="4" y="5" width="6" height="1" fill="#000"/><rect x="0" y="6" width="1" height="1" fill="#000"/><rect x="1" y="6" width="1" height="1" fill="#fff"/><rect x="2" y="6" width="1" height="1" fill="#ffff00"/><rect x="3" y="6" width="1" height="1" fill="#fff"/><rect x="4" y="6" width="1" height="1" fill="#ffff00"/><rect x="5" y="6" width="1" height="1" fill="#fff"/><rect x="6" y="6" width="3" height="1" fill="#ffff00"/><rect x="9" y="6" width="1" height="1" fill="#000"/><rect x="0" y="7" width="1" height="1" fill="#000"/><rect x="1" y="7" width="1" height="1" fill="#ffff00"/><rect x="2" y="7" width="1" height="1" fill="#fff"/><rect x="3" y="7" width="1" height="1" fill="#ffff00"/><rect x="4" y="7" width="1" height="1" fill="#fff"/><rect x="5" y="7" width="1" height="1" fill="#ffff00"/><rect x="6" y="7" width="9" height="1" fill="#000"/><rect x="0" y="8" width="1" height="1" fill="#000"/><rect x="1" y="8" width="1" height="1" fill="#fff"/><rect x="2" y="8" width="1" height="1" fill="#ffff00"/><rect x="3" y="8" width="1" height="1" fill="#fff"/><rect x="4" y="8" width="1" height="1" fill="#ffff00"/><rect x="5" y="8" width="1" height="1" fill="#000"/><rect x="6" y="8" width="8" height="1" fill="#808000"/><rect x="14" y="8" width="1" height="1" fill="#000"/><rect x="0" y="9" width="1" height="1" fill="#000"/><rect x="1" y="9" width="1" height="1" fill="#ffff00"/><rect x="2" y="9" width="1" height="1" fill="#fff"/><rect x="3" y="9" width="1" height="1" fill="#ffff00"/><rect x="4" y="9" width="1" height="1" fill="#000"/><rect x="5" y="9" width="8" height="1" fill="#808000"/><rect x="13" y="9" width="1" height="1" fill="#000"/><rect x="0" y="10" width="1" height="1" fill="#000"/><rect x="1" y="10" width="1" height="1" fill="#fff"/><rect x="2" y="10" width="1" height="1" fill="#ffff00"/><rect x="3" y="10" width="1" height="1" fill="#000"/><rect x="4" y="10" width="8" height="1" fill="#808000"/><rect x="12" y="10" width="1" height="1" fill="#000"/><rect x="0" y="11" width="1" height="1" fill="#000"/><rect x="1" y="11" width="1" height="1" fill="#ffff00"/><rect x="2" y="11" width="1" height="1" fill="#000"/><rect x="3" y="11" width="8" height="1" fill="#808000"/><rect x="11" y="11" width="1" height="1" fill="#000"/><rect x="0" y="12" width="11" height="1" fill="#000"/></svg>
<svg style="left:58px;top:51px" width="14" height="14" viewBox="0 0 14 14" shape-rendering="crispEdges"><rect x="0" y="0" width="14" height="1" fill="#000"/><rect x="0" y="1" width="1" height="1" fill="#000"/><rect x="1" y="1" width="1" height="1" fill="#808000"/><rect x="2" y="1" width="1" height="1" fill="#000"/><rect x="3" y="1" width="8" height="1" fill="#ece9d8"/><rect x="11" y="1" width="1" height="1" fill="#000"/><rect x="12" y="1" width="1" height="1" fill="#fff"/><rect x="13" y="1" width="1" height="1" fill="#000"/><rect x="0" y="2" width="1" height="1" fill="#000"/><rect x="1" y="2" width="1" height="1" fill="#808000"/><rect x="2" y="2" width="1" height="1" fill="#000"/><rect x="3" y="2" width="8" height="1" fill="#ece9d8"/><rect x="11" y="2" width="1" height="1" fill="#000"/><rect x="12" y="2" width="1" height="1" fill="#808000"/><rect x="13" y="2" width="1" height="1" fill="#000"/><rect x="0" y="3" width="1" height="1" fill="#000"/><rect x="1" y="3" width="1" height="1" fill="#808000"/><rect x="2" y="3" width="1" height="1" fill="#000"/><rect x="3" y="3" width="8" height="1" fill="#ece9d8"/><rect x="11" y="3" width="1" height="1" fill="#000"/><rect x="12" y="3" width="1" height="1" fill="#808000"/><rect x="13" y="3" width="1" height="1" fill="#000"/><rect x="0" y="4" width="1" height="1" fill="#000"/><rect x="1" y="4" width="1" height="1" fill="#808000"/><rect x="2" y="4" width="1" height="1" fill="#000"/><rect x="3" y="4" width="8" height="1" fill="#ece9d8"/><rect x="11" y="4" width="1" height="1" fill="#000"/><rect x="12" y="4" width="1" height="1" fill="#808000"/><rect x="13" y="4" width="1" height="1" fill="#000"/><rect x="0" y="5" width="1" height="1" fill="#000"/><rect x="1" y="5" width="1" height="1" fill="#808000"/><rect x="2" y="5" width="1" height="1" fill="#000"/><rect x="3" y="5" width="8" height="1" fill="#ece9d8"/><rect x="11" y="5" width="1" height="1" fill="#000"/><rect x="12" y="5" width="1" height="1" fill="#808000"/><rect x="13" y="5" width="1" height="1" fill="#000"/><rect x="0" y="6" width="1" height="1" fill="#000"/><rect x="1" y="6" width="1" height="1" fill="#808000"/><rect x="2" y="6" width="1" height="1" fill="#000"/><rect x="3" y="6" width="8" height="1" fill="#ece9d8"/><rect x="11" y="6" width="1" height="1" fill="#000"/><rect x="12" y="6" width="1" height="1" fill="#808000"/><rect x="13" y="6" width="1" height="1" fill="#000"/><rect x="0" y="7" width="1" height="1" fill="#000"/><rect x="1" y="7" width="2" height="1" fill="#808000"/><rect x="3" y="7" width="8" height="1" fill="#000"/><rect x="11" y="7" width="2" height="1" fill="#808000"/><rect x="13" y="7" width="1" height="1" fill="#000"/><rect x="0" y="8" width="1" height="1" fill="#000"/><rect x="1" y="8" width="12" height="1" fill="#808000"/><rect x="13" y="8" width="1" height="1" fill="#000"/><rect x="0" y="9" width="1" height="1" fill="#000"/><rect x="1" y="9" width="2" height="1" fill="#808000"/><rect x="3" y="9" width="9" height="1" fill="#000"/><rect x="12" y="9" width="1" height="1" fill="#808000"/><rect x="13" y="9" width="1" height="1" fill="#000"/><rect x="0" y="10" width="1" height="1" fill="#000"/><rect x="1" y="10" width="2" height="1" fill="#808000"/><rect x="3" y="10" width="6" height="1" fill="#000"/><rect x="9" y="10" width="2" height="1" fill="#fff"/><rect x="11" y="10" width="1" height="1" fill="#000"/><rect x="12" y="10" width="1" height="1" fill="#808000"/><rect x="13" y="10" width="1" height="1" fill="#000"/><rect x="0" y="11" width="1" height="1" fill="#000"/><rect x="1" y="11" width="2" height="1" fill="#808000"/><rect x="3" y="11" width="6" height="1" fill="#000"/><rect x="9" y="11" width="2" height="1" fill="#fff"/><rect x="11" y="11" width="1" height="1" fill="#000"/><rect x="12" y="11" width="1" height="1" fill="#808000"/><rect x="13" y="11" width="1" height="1" fill="#000"/><rect x="0" y="12" width="1" height="1" fill="#000"/><rect x="1" y="12" width="2" height="1" fill="#808000"/><rect x="3" y="12" width="6" height="1" fill="#000"/><rect x="9" y="12" width="2" height="1" fill="#fff"/><rect x="11" y="12" width="1" height="1" fill="#000"/><rect x="12" y="12" width="1" height="1" fill="#808000"/><rect x="13" y="12" width="1" height="1" fill="#000"/><rect x="1" y="13" width="13" height="1" fill="#000"/></svg>
<svg style="left:87px;top:50px" width="16" height="15" viewBox="0 0 16 15" shape-rendering="crispEdges"><rect x="0" y="0" width="9" height="1" fill="#000"/><rect x="0" y="1" width="1" height="1" fill="#000"/><rect x="1" y="1" width="7" height="1" fill="#fff"/><rect x="8" y="1" width="2" height="1" fill="#000"/><rect x="0" y="2" width="1" height="1" fill="#000"/><rect x="1" y="2" width="7" height="1" fill="#fff"/><rect x="8" y="2" width="1" height="1" fill="#000"/><rect x="9" y="2" width="1" height="1" fill="#fff"/><rect x="10" y="2" width="1" height="1" fill="#000"/><rect x="0" y="3" width="1" height="1" fill="#000"/><rect x="1" y="3" width="7" height="1" fill="#fff"/><rect x="8" y="3" width="4" height="1" fill="#000"/><rect x="0" y="4" width="1" height="1" fill="#000"/><rect x="1" y="4" width="10" height="1" fill="#fff"/><rect x="11" y="4" width="1" height="1" fill="#000"/><rect x="0" y="5" width="1" height="1" fill="#000"/><rect x="1" y="5" width="6" height="1" fill="#fff"/><rect x="7" y="5" width="5" height="1" fill="#000"/><rect x="0" y="6" width="1" height="1" fill="#000"/><rect x="1" y="6" width="5" height="1" fill="#fff"/><rect x="6" y="6" width="1" height="1" fill="#000"/><rect x="7" y="6" width="4" height="1" fill="#f0d8c8"/><rect x="11" y="6" width="2" height="1" fill="#000"/><rect x="0" y="7" width="1" height="1" fill="#000"/><rect x="1" y="7" width="5" height="1" fill="#fff"/><rect x="6" y="7" width="1" height="1" fill="#000"/><rect x="7" y="7" width="1" height="1" fill="#00ffff"/><rect x="8" y="7" width="3" height="1" fill="#f0d8c8"/><rect x="11" y="7" width="1" height="1" fill="#fff"/><rect x="12" y="7" width="1" height="1" fill="#000"/><rect x="0" y="8" width="1" height="1" fill="#000"/><rect x="1" y="8" width="5" height="1" fill="#fff"/><rect x="6" y="8" width="1" height="1" fill="#000"/><rect x="7" y="8" width="1" height="1" fill="#f0d8c8"/><rect x="8" y="8" width="1" height="1" fill="#00ffff"/><rect x="9" y="8" width="3" height="1" fill="#f0d8c8"/><rect x="12" y="8" width="1" height="1" fill="#000"/><rect x="0" y="9" width="1" height="1" fill="#000"/><rect x="1" y="9" width="5" height="1" fill="#fff"/><rect x="6" y="9" width="1" height="1" fill="#000"/><rect x="7" y="9" width="2" height="1" fill="#f0d8c8"/><rect x="9" y="9" width="1" height="1" fill="#00ffff"/><rect x="10" y="9" width="2" height="1" fill="#f0d8c8"/><rect x="12" y="9" width="1" height="1" fill="#000"/><rect x="0" y="10" width="1" height="1" fill="#000"/><rect x="1" y="10" width="6" height="1" fill="#fff"/><rect x="7" y="10" width="1" height="1" fill="#000"/><rect x="8" y="10" width="3" height="1" fill="#f0d8c8"/><rect x="11" y="10" width="2" height="1" fill="#000"/><rect x="0" y="11" width="1" height="1" fill="#000"/><rect x="1" y="11" width="7" height="1" fill="#fff"/><rect x="8" y="11" width="6" height="1" fill="#000"/><rect x="0" y="12" width="1" height="1" fill="#000"/><rect x="1" y="12" width="10" height="1" fill="#fff"/><rect x="11" y="12" width="4" height="1" fill="#000"/><rect x="0" y="13" width="1" height="1" fill="#000"/><rect x="1" y="13" width="10" height="1" fill="#fff"/><rect x="11" y="13" width="1" height="1" fill="#000"/><rect x="13" y="13" width="3" height="1" fill="#000"/><rect x="0" y="14" width="12" height="1" fill="#000"/><rect x="14" y="14" width="1" height="1" fill="#000"/></svg>
<svg style="left:111px;top:51px" width="17" height="14" viewBox="0 0 17 14" shape-rendering="crispEdges"><rect x="5" y="0" width="9" height="1" fill="#000"/><rect x="4" y="1" width="1" height="1" fill="#000"/><rect x="5" y="1" width="8" height="1" fill="#fff"/><rect x="13" y="1" width="1" height="1" fill="#000"/><rect x="4" y="2" width="1" height="1" fill="#000"/><rect x="5" y="2" width="1" height="1" fill="#fff"/><rect x="6" y="2" width="5" height="1" fill="#000"/><rect x="11" y="2" width="1" height="1" fill="#fff"/><rect x="12" y="2" width="1" height="1" fill="#000"/><rect x="3" y="3" width="1" height="1" fill="#000"/><rect x="4" y="3" width="8" height="1" fill="#fff"/><rect x="12" y="3" width="1" height="1" fill="#000"/><rect x="14" y="3" width="1" height="1" fill="#000"/><rect x="3" y="4" width="1" height="1" fill="#000"/><rect x="4" y="4" width="1" height="1" fill="#fff"/><rect x="5" y="4" width="5" height="1" fill="#000"/><rect x="10" y="4" width="2" height="1" fill="#fff"/><rect x="12" y="4" width="2" height="1" fill="#000"/><rect x="14" y="4" width="1" height="1" fill="#a0a0a0"/><rect x="15" y="4" width="1" height="1" fill="#000"/><rect x="2" y="5" width="1" height="1" fill="#000"/><rect x="3" y="5" width="8" height="1" fill="#fff"/><rect x="11" y="5" width="2" height="1" fill="#000"/><rect x="13" y="5" width="1" height="1" fill="#fff"/><rect x="14" y="5" width="1" height="1" fill="#a0a0a0"/><rect x="15" y="5" width="1" height="1" fill="#000"/><rect x="1" y="6" width="11" height="1" fill="#000"/><rect x="12" y="6" width="1" height="1" fill="#a0a0a0"/><rect x="13" y="6" width="1" height="1" fill="#fff"/><rect x="14" y="6" width="1" height="1" fill="#a0a0a0"/><rect x="15" y="6" width="1" height="1" fill="#000"/><rect x="0" y="7" width="1" height="1" fill="#000"/><rect x="1" y="7" width="10" height="1" fill="#fff"/><rect x="11" y="7" width="2" height="1" fill="#000"/><rect x="13" y="7" width="1" height="1" fill="#a0a0a0"/><rect x="14" y="7" width="1" height="1" fill="#fff"/><rect x="15" y="7" width="2" height="1" fill="#000"/><rect x="0" y="8" width="12" height="1" fill="#000"/><rect x="12" y="8" width="1" height="1" fill="#a0a0a0"/><rect x="13" y="8" width="1" height="1" fill="#fff"/><rect x="14" y="8" width="1" height="1" fill="#a0a0a0"/><rect x="15" y="8" width="2" height="1" fill="#000"/><rect x="0" y="9" width="1" height="1" fill="#000"/><rect x="1" y="9" width="6" height="1" fill="#fff"/><rect x="7" y="9" width="3" height="1" fill="#ffff00"/><rect x="10" y="9" width="2" height="1" fill="#fff"/><rect x="12" y="9" width="1" height="1" fill="#000"/><rect x="13" y="9" width="1" height="1" fill="#a0a0a0"/><rect x="14" y="9" width="2" height="1" fill="#000"/><rect x="0" y="10" width="13" height="1" fill="#000"/><rect x="13" y="10" width="1" height="1" fill="#a0a0a0"/><rect x="14" y="10" width="2" height="1" fill="#000"/><rect x="0" y="11" width="1" height="1" fill="#000"/><rect x="1" y="11" width="11" height="1" fill="#fff"/><rect x="12" y="11" width="3" height="1" fill="#000"/><rect x="1" y="12" width="13" height="1" fill="#000"/><rect x="2" y="13" width="10" height="1" fill="#000"/></svg>
<svg style="left:145px;top:49px" width="20" height="19" viewBox="0 0 20 19" shape-rendering="crispEdges"><rect x="9" y="0" width="9" height="1" fill="#000"/><rect x="9" y="1" width="7" height="1" fill="#000"/><rect x="16" y="1" width="1" height="1" fill="#008080"/><rect x="17" y="1" width="1" height="1" fill="#000"/><rect x="9" y="2" width="6" height="1" fill="#000"/><rect x="15" y="2" width="2" height="1" fill="#008080"/><rect x="17" y="2" width="1" height="1" fill="#000"/><rect x="9" y="3" width="5" height="1" fill="#000"/><rect x="14" y="3" width="1" height="1" fill="#fff"/><rect x="15" y="3" width="2" height="1" fill="#008080"/><rect x="17" y="3" width="1" height="1" fill="#000"/><rect x="9" y="4" width="4" height="1" fill="#000"/><rect x="13" y="4" width="1" height="1" fill="#fff"/><rect x="14" y="4" width="3" height="1" fill="#008080"/><rect x="17" y="4" width="1" height="1" fill="#000"/><rect x="5" y="5" width="1" height="1" fill="#800000"/><rect x="9" y="5" width="4" height="1" fill="#000"/><rect x="13" y="5" width="1" height="1" fill="#fff"/><rect x="14" y="5" width="3" height="1" fill="#008080"/><rect x="17" y="5" width="1" height="1" fill="#000"/><rect x="5" y="6" width="1" height="1" fill="#ff0000"/><rect x="6" y="6" width="1" height="1" fill="#800000"/><rect x="9" y="6" width="4" height="1" fill="#000"/><rect x="13" y="6" width="1" height="1" fill="#fff"/><rect x="14" y="6" width="3" height="1" fill="#008080"/><rect x="17" y="6" width="1" height="1" fill="#000"/><rect x="2" y="7" width="1" height="1" fill="#ff0000"/><rect x="3" y="7" width="1" height="1" fill="#800000"/><rect x="4" y="7" width="1" height="1" fill="#ff0000"/><rect x="5" y="7" width="1" height="1" fill="#800000"/><rect x="6" y="7" width="1" height="1" fill="#ff0000"/><rect x="7" y="7" width="1" height="1" fill="#800000"/><rect x="9" y="7" width="4" height="1" fill="#000"/><rect x="13" y="7" width="1" height="1" fill="#fff"/><rect x="14" y="7" width="3" height="1" fill="#008080"/><rect x="17" y="7" width="1" height="1" fill="#000"/><rect x="2" y="8" width="1" height="1" fill="#800000"/><rect x="3" y="8" width="1" height="1" fill="#ff0000"/><rect x="4" y="8" width="1" height="1" fill="#800000"/><rect x="5" y="8" width="1" height="1" fill="#ff0000"/><rect x="6" y="8" width="1" height="1" fill="#800000"/><rect x="7" y="8" width="1" height="1" fill="#ff0000"/><rect x="8" y="8" width="1" height="1" fill="#800000"/><rect x="9" y="8" width="4" height="1" fill="#000"/><rect x="13" y="8" width="1" height="1" fill="#fff"/><rect x="14" y="8" width="3" height="1" fill="#008080"/><rect x="17" y="8" width="1" height="1" fill="#000"/><rect x="2" y="9" width="1" height="1" fill="#ff0000"/><rect x="3" y="9" width="1" height="1" fill="#800000"/><rect x="4" y="9" width="1" height="1" fill="#ff0000"/><rect x="5" y="9" width="1" height="1" fill="#800000"/><rect x="6" y="9" width="1" height="1" fill="#ff0000"/><rect x="7" y="9" width="1" height="1" fill="#800000"/><rect x="8" y="9" width="1" height="1" fill="#ff0000"/><rect x="9" y="9" width="1" height="1" fill="#800000"/><rect x="10" y="9" width="3" height="1" fill="#000"/><rect x="13" y="9" width="1" height="1" fill="#fff"/><rect x="14" y="9" width="1" height="1" fill="#000"/><rect x="15" y="9" width="2" height="1" fill="#008080"/><rect x="17" y="9" width="1" height="1" fill="#000"/><rect x="2" y="10" width="1" height="1" fill="#800000"/><rect x="3" y="10" width="1" height="1" fill="#ff0000"/><rect x="4" y="10" width="1" height="1" fill="#800000"/><rect x="5" y="10" width="1" height="1" fill="#ff0000"/><rect x="6" y="10" width="1" height="1" fill="#800000"/><rect x="7" y="10" width="1" height="1" fill="#ff0000"/><rect x="8" y="10" width="1" height="1" fill="#800000"/><rect x="9" y="10" width="4" height="1" fill="#000"/><rect x="13" y="10" width="1" height="1" fill="#fff"/><rect x="14" y="10" width="3" height="1" fill="#008080"/><rect x="17" y="10" width="1" height="1" fill="#000"/><rect x="2" y="11" width="1" height="1" fill="#ff0000"/><rect x="3" y="11" width="1" height="1" fill="#800000"/><rect x="4" y="11" width="1" height="1" fill="#ff0000"/><rect x="5" y="11" width="1" height="1" fill="#800000"/><rect x="6" y="11" width="1" height="1" fill="#ff0000"/><rect x="7" y="11" width="1" height="1" fill="#800000"/><rect x="9" y="11" width="4" height="1" fill="#000"/><rect x="13" y="11" width="1" height="1" fill="#fff"/><rect x="14" y="11" width="3" height="1" fill="#008080"/><rect x="17" y="11" width="1" height="1" fill="#000"/><rect x="5" y="12" width="1" height="1" fill="#ff0000"/><rect x="6" y="12" width="1" height="1" fill="#800000"/><rect x="9" y="12" width="4" height="1" fill="#000"/><rect x="13" y="12" width="1" height="1" fill="#fff"/><rect x="14" y="12" width="3" height="1" fill="#008080"/><rect x="17" y="12" width="1" height="1" fill="#000"/><rect x="5" y="13" width="1" height="1" fill="#800000"/><rect x="9" y="13" width="4" height="1" fill="#000"/><rect x="13" y="13" width="1" height="1" fill="#fff"/><rect x="14" y="13" width="3" height="1" fill="#008080"/><rect x="17" y="13" width="1" height="1" fill="#000"/><rect x="0" y="14" width="13" height="1" fill="#000"/><rect x="13" y="14" width="1" height="1" fill="#fff"/><rect x="14" y="14" width="3" height="1" fill="#008080"/><rect x="17" y="14" width="3" height="1" fill="#000"/><rect x="12" y="15" width="1" height="1" fill="#000"/><rect x="13" y="15" width="1" height="1" fill="#fff"/><rect x="14" y="15" width="2" height="1" fill="#008080"/><rect x="16" y="15" width="1" height="1" fill="#000"/><rect x="12" y="16" width="1" height="1" fill="#000"/><rect x="13" y="16" width="1" height="1" fill="#fff"/><rect x="14" y="16" width="1" height="1" fill="#008080"/><rect x="15" y="16" width="1" height="1" fill="#000"/><rect x="12" y="17" width="1" height="1" fill="#000"/><rect x="13" y="17" width="1" height="1" fill="#fff"/><rect x="14" y="17" width="1" height="1" fill="#000"/><rect x="12" y="18" width="2" height="1" fill="#000"/></svg>
<svg style="left:184px;top:50px" width="14" height="16" viewBox="0 0 14 16" shape-rendering="crispEdges"><rect x="0" y="0" width="14" height="1" fill="#000"/><rect x="0" y="1" width="1" height="1" fill="#000"/><rect x="1" y="1" width="12" height="1" fill="#808000"/><rect x="13" y="1" width="1" height="1" fill="#000"/><rect x="0" y="2" width="1" height="1" fill="#000"/><rect x="1" y="2" width="2" height="1" fill="#fff"/><rect x="3" y="2" width="10" height="1" fill="#808000"/><rect x="13" y="2" width="1" height="1" fill="#000"/><rect x="0" y="3" width="1" height="1" fill="#000"/><rect x="1" y="3" width="12" height="1" fill="#808000"/><rect x="13" y="3" width="1" height="1" fill="#000"/><rect x="0" y="4" width="1" height="1" fill="#000"/><rect x="1" y="4" width="2" height="1" fill="#fff"/><rect x="3" y="4" width="2" height="1" fill="#808000"/><rect x="5" y="4" width="7" height="1" fill="#fff"/><rect x="12" y="4" width="1" height="1" fill="#808000"/><rect x="13" y="4" width="1" height="1" fill="#000"/><rect x="0" y="5" width="1" height="1" fill="#000"/><rect x="1" y="5" width="4" height="1" fill="#808000"/><rect x="5" y="5" width="7" height="1" fill="#fff"/><rect x="12" y="5" width="1" height="1" fill="#808000"/><rect x="13" y="5" width="1" height="1" fill="#000"/><rect x="0" y="6" width="1" height="1" fill="#000"/><rect x="1" y="6" width="2" height="1" fill="#fff"/><rect x="3" y="6" width="2" height="1" fill="#808000"/><rect x="5" y="6" width="7" height="1" fill="#fff"/><rect x="12" y="6" width="1" height="1" fill="#808000"/><rect x="13" y="6" width="1" height="1" fill="#000"/><rect x="0" y="7" width="1" height="1" fill="#000"/><rect x="1" y="7" width="4" height="1" fill="#808000"/><rect x="5" y="7" width="7" height="1" fill="#fff"/><rect x="12" y="7" width="1" height="1" fill="#808000"/><rect x="13" y="7" width="1" height="1" fill="#000"/><rect x="0" y="8" width="1" height="1" fill="#000"/><rect x="1" y="8" width="12" height="1" fill="#808000"/><rect x="13" y="8" width="1" height="1" fill="#000"/><rect x="0" y="9" width="1" height="1" fill="#000"/><rect x="1" y="9" width="2" height="1" fill="#fff"/><rect x="3" y="9" width="10" height="1" fill="#808000"/><rect x="13" y="9" width="1" height="1" fill="#000"/><rect x="0" y="10" width="1" height="1" fill="#000"/><rect x="1" y="10" width="12" height="1" fill="#808000"/><rect x="13" y="10" width="1" height="1" fill="#000"/><rect x="0" y="11" width="1" height="1" fill="#000"/><rect x="1" y="11" width="2" height="1" fill="#fff"/><rect x="3" y="11" width="10" height="1" fill="#808000"/><rect x="13" y="11" width="1" height="1" fill="#000"/><rect x="0" y="12" width="1" height="1" fill="#000"/><rect x="1" y="12" width="12" height="1" fill="#808000"/><rect x="13" y="12" width="1" height="1" fill="#000"/><rect x="0" y="13" width="1" height="1" fill="#000"/><rect x="1" y="13" width="2" height="1" fill="#fff"/><rect x="3" y="13" width="10" height="1" fill="#808000"/><rect x="13" y="13" width="1" height="1" fill="#000"/><rect x="0" y="14" width="1" height="1" fill="#000"/><rect x="1" y="14" width="12" height="1" fill="#808000"/><rect x="13" y="14" width="1" height="1" fill="#000"/><rect x="0" y="15" width="14" height="1" fill="#000"/></svg>
<svg style="left:205px;top:48px" width="20" height="17" viewBox="0 0 20 17" shape-rendering="crispEdges"><rect x="0" y="0" width="20" height="1" fill="#c0c0c0"/><rect x="0" y="1" width="1" height="1" fill="#c0c0c0"/><rect x="1" y="1" width="3" height="1" fill="#fff"/><rect x="4" y="1" width="1" height="1" fill="#c0c0c0"/><rect x="5" y="1" width="3" height="1" fill="#fff"/><rect x="8" y="1" width="1" height="1" fill="#c0c0c0"/><rect x="9" y="1" width="3" height="1" fill="#fff"/><rect x="12" y="1" width="1" height="1" fill="#c0c0c0"/><rect x="13" y="1" width="3" height="1" fill="#fff"/><rect x="16" y="1" width="1" height="1" fill="#c0c0c0"/><rect x="17" y="1" width="2" height="1" fill="#fff"/><rect x="19" y="1" width="1" height="1" fill="#c0c0c0"/><rect x="0" y="2" width="1" height="1" fill="#c0c0c0"/><rect x="1" y="2" width="3" height="1" fill="#fff"/><rect x="4" y="2" width="1" height="1" fill="#c0c0c0"/><rect x="5" y="2" width="3" height="1" fill="#fff"/><rect x="8" y="2" width="1" height="1" fill="#c0c0c0"/><rect x="9" y="2" width="3" height="1" fill="#fff"/><rect x="12" y="2" width="1" height="1" fill="#c0c0c0"/><rect x="13" y="2" width="3" height="1" fill="#fff"/><rect x="16" y="2" width="1" height="1" fill="#c0c0c0"/><rect x="17" y="2" width="2" height="1" fill="#fff"/><rect x="19" y="2" width="1" height="1" fill="#c0c0c0"/><rect x="0" y="3" width="1" height="1" fill="#c0c0c0"/><rect x="1" y="3" width="3" height="1" fill="#fff"/><rect x="4" y="3" width="1" height="1" fill="#c0c0c0"/><rect x="5" y="3" width="3" height="1" fill="#fff"/><rect x="8" y="3" width="1" height="1" fill="#c0c0c0"/><rect x="9" y="3" width="3" height="1" fill="#fff"/><rect x="12" y="3" width="1" height="1" fill="#c0c0c0"/><rect x="13" y="3" width="3" height="1" fill="#fff"/><rect x="16" y="3" width="1" height="1" fill="#c0c0c0"/><rect x="17" y="3" width="2" height="1" fill="#fff"/><rect x="19" y="3" width="1" height="1" fill="#ff0000"/><rect x="0" y="4" width="17" height="1" fill="#c0c0c0"/><rect x="17" y="4" width="3" height="1" fill="#ff0000"/><rect x="0" y="5" width="1" height="1" fill="#c0c0c0"/><rect x="1" y="5" width="3" height="1" fill="#fff"/><rect x="4" y="5" width="1" height="1" fill="#c0c0c0"/><rect x="5" y="5" width="3" height="1" fill="#fff"/><rect x="8" y="5" width="1" height="1" fill="#c0c0c0"/><rect x="9" y="5" width="3" height="1" fill="#fff"/><rect x="12" y="5" width="1" height="1" fill="#c0c0c0"/><rect x="13" y="5" width="2" height="1" fill="#fff"/><rect x="15" y="5" width="5" height="1" fill="#ff0000"/><rect x="0" y="6" width="1" height="1" fill="#c0c0c0"/><rect x="1" y="6" width="3" height="1" fill="#fff"/><rect x="4" y="6" width="1" height="1" fill="#c0c0c0"/><rect x="5" y="6" width="3" height="1" fill="#fff"/><rect x="8" y="6" width="1" height="1" fill="#c0c0c0"/><rect x="9" y="6" width="3" height="1" fill="#fff"/><rect x="12" y="6" width="1" height="1" fill="#c0c0c0"/><rect x="13" y="6" width="7" height="1" fill="#ff0000"/><rect x="0" y="7" width="1" height="1" fill="#c0c0c0"/><rect x="1" y="7" width="3" height="1" fill="#fff"/><rect x="4" y="7" width="1" height="1" fill="#c0c0c0"/><rect x="5" y="7" width="3" height="1" fill="#fff"/><rect x="8" y="7" width="1" height="1" fill="#c0c0c0"/><rect x="9" y="7" width="2" height="1" fill="#fff"/><rect x="11" y="7" width="9" height="1" fill="#ff0000"/><rect x="0" y="8" width="9" height="1" fill="#c0c0c0"/><rect x="9" y="8" width="11" height="1" fill="#ff0000"/><rect x="0" y="9" width="1" height="1" fill="#c0c0c0"/><rect x="1" y="9" width="3" height="1" fill="#fff"/><rect x="4" y="9" width="1" height="1" fill="#c0c0c0"/><rect x="5" y="9" width="2" height="1" fill="#fff"/><rect x="7" y="9" width="13" height="1" fill="#ff0000"/><rect x="0" y="10" width="1" height="1" fill="#c0c0c0"/><rect x="1" y="10" width="3" height="1" fill="#fff"/><rect x="4" y="10" width="1" height="1" fill="#c0c0c0"/><rect x="5" y="10" width="3" height="1" fill="#ff0000"/><rect x="8" y="10" width="1" height="1" fill="#c0c0c0"/><rect x="9" y="10" width="3" height="1" fill="#ff0000"/><rect x="12" y="10" width="1" height="1" fill="#c0c0c0"/><rect x="13" y="10" width="3" height="1" fill="#ff0000"/><rect x="16" y="10" width="1" height="1" fill="#c0c0c0"/><rect x="17" y="10" width="3" height="1" fill="#ff0000"/><rect x="0" y="11" width="20" height="1" fill="#000"/><rect x="2" y="12" width="1" height="1" fill="#ff0000"/><rect x="4" y="12" width="1" height="1" fill="#ff0000"/><rect x="6" y="12" width="1" height="1" fill="#ff0000"/><rect x="1" y="13" width="1" height="1" fill="#ff0000"/><rect x="3" y="13" width="1" height="1" fill="#800000"/><rect x="5" y="13" width="1" height="1" fill="#ff0000"/><rect x="0" y="14" width="1" height="1" fill="#ff0000"/><rect x="2" y="14" width="1" height="1" fill="#ff0000"/><rect x="4" y="14" width="1" height="1" fill="#ff0000"/><rect x="1" y="15" width="1" height="1" fill="#800000"/><rect x="3" y="15" width="1" height="1" fill="#ff0000"/><rect x="0" y="16" width="1" height="1" fill="#ff0000"/><rect x="2" y="16" width="1" height="1" fill="#ff0000"/></svg>
<svg style="left:229px;top:50px" width="19" height="15" viewBox="0 0 19 15" shape-rendering="crispEdges"><rect x="9" y="0" width="1" height="1" fill="#000"/><rect x="9" y="1" width="1" height="1" fill="#000"/><rect x="8" y="2" width="3" height="1" fill="#000"/><rect x="4" y="3" width="7" height="1" fill="#000"/><rect x="4" y="4" width="1" height="1" fill="#000"/><rect x="6" y="4" width="1" height="1" fill="#000"/><rect x="8" y="4" width="7" height="1" fill="#000"/><rect x="3" y="5" width="1" height="1" fill="#000"/><rect x="7" y="5" width="1" height="1" fill="#000"/><rect x="9" y="5" width="1" height="1" fill="#000"/><rect x="12" y="5" width="1" height="1" fill="#000"/><rect x="14" y="5" width="1" height="1" fill="#000"/><rect x="3" y="6" width="1" height="1" fill="#000"/><rect x="7" y="6" width="1" height="1" fill="#000"/><rect x="9" y="6" width="1" height="1" fill="#000"/><rect x="11" y="6" width="1" height="1" fill="#000"/><rect x="15" y="6" width="1" height="1" fill="#000"/><rect x="2" y="7" width="1" height="1" fill="#000"/><rect x="8" y="7" width="2" height="1" fill="#000"/><rect x="11" y="7" width="1" height="1" fill="#000"/><rect x="15" y="7" width="1" height="1" fill="#000"/><rect x="2" y="8" width="1" height="1" fill="#000"/><rect x="8" y="8" width="3" height="1" fill="#000"/><rect x="16" y="8" width="1" height="1" fill="#000"/><rect x="1" y="9" width="1" height="1" fill="#000"/><rect x="9" y="9" width="1" height="1" fill="#000"/><rect x="16" y="9" width="1" height="1" fill="#000"/><rect x="1" y="10" width="1" height="1" fill="#000"/><rect x="9" y="10" width="2" height="1" fill="#000"/><rect x="17" y="10" width="1" height="1" fill="#000"/><rect x="0" y="11" width="19" height="1" fill="#000"/><rect x="1" y="12" width="1" height="1" fill="#000"/><rect x="7" y="12" width="1" height="1" fill="#000"/><rect x="10" y="12" width="2" height="1" fill="#000"/><rect x="17" y="12" width="1" height="1" fill="#000"/><rect x="2" y="13" width="5" height="1" fill="#000"/><rect x="11" y="13" width="6" height="1" fill="#000"/></svg>
<svg style="left:260px;top:50px" width="18" height="17" viewBox="0 0 18 17" shape-rendering="crispEdges"><rect x="1" y="1" width="2" height="1" fill="#000"/><rect x="7" y="1" width="1" height="1" fill="#000"/><rect x="0" y="2" width="1" height="1" fill="#000"/><rect x="3" y="2" width="1" height="1" fill="#000"/><rect x="6" y="2" width="1" height="1" fill="#000"/><rect x="0" y="3" width="1" height="1" fill="#000"/><rect x="3" y="3" width="1" height="1" fill="#000"/><rect x="5" y="3" width="1" height="1" fill="#000"/><rect x="10" y="3" width="7" height="1" fill="#000"/><rect x="1" y="4" width="2" height="1" fill="#000"/><rect x="4" y="4" width="1" height="1" fill="#000"/><rect x="10" y="4" width="1" height="1" fill="#000"/><rect x="11" y="4" width="4" height="1" fill="#ffff00"/><rect x="15" y="4" width="1" height="1" fill="#808000"/><rect x="16" y="4" width="1" height="1" fill="#000"/><rect x="3" y="5" width="1" height="1" fill="#000"/><rect x="5" y="5" width="2" height="1" fill="#000"/><rect x="10" y="5" width="1" height="1" fill="#000"/><rect x="11" y="5" width="2" height="1" fill="#ffff00"/><rect x="13" y="5" width="1" height="1" fill="#000"/><rect x="14" y="5" width="1" height="1" fill="#ffff00"/><rect x="15" y="5" width="1" height="1" fill="#808000"/><rect x="16" y="5" width="1" height="1" fill="#000"/><rect x="2" y="6" width="1" height="1" fill="#000"/><rect x="4" y="6" width="1" height="1" fill="#000"/><rect x="7" y="6" width="1" height="1" fill="#000"/><rect x="10" y="6" width="1" height="1" fill="#000"/><rect x="11" y="6" width="4" height="1" fill="#ffff00"/><rect x="15" y="6" width="1" height="1" fill="#808000"/><rect x="16" y="6" width="1" height="1" fill="#000"/><rect x="1" y="7" width="1" height="1" fill="#000"/><rect x="4" y="7" width="1" height="1" fill="#000"/><rect x="7" y="7" width="1" height="1" fill="#000"/><rect x="10" y="7" width="1" height="1" fill="#000"/><rect x="11" y="7" width="2" height="1" fill="#ffff00"/><rect x="13" y="7" width="1" height="1" fill="#000"/><rect x="14" y="7" width="1" height="1" fill="#ffff00"/><rect x="15" y="7" width="1" height="1" fill="#808000"/><rect x="16" y="7" width="1" height="1" fill="#000"/><rect x="0" y="8" width="1" height="1" fill="#000"/><rect x="5" y="8" width="2" height="1" fill="#000"/><rect x="10" y="8" width="1" height="1" fill="#000"/><rect x="11" y="8" width="4" height="1" fill="#ffff00"/><rect x="15" y="8" width="1" height="1" fill="#808000"/><rect x="16" y="8" width="1" height="1" fill="#000"/><rect x="10" y="9" width="1" height="1" fill="#000"/><rect x="11" y="9" width="2" height="1" fill="#ffff00"/><rect x="13" y="9" width="1" height="1" fill="#000"/><rect x="14" y="9" width="1" height="1" fill="#ffff00"/><rect x="15" y="9" width="1" height="1" fill="#808000"/><rect x="16" y="9" width="1" height="1" fill="#000"/><rect x="10" y="10" width="1" height="1" fill="#000"/><rect x="11" y="10" width="4" height="1" fill="#ffff00"/><rect x="15" y="10" width="1" height="1" fill="#808000"/><rect x="16" y="10" width="1" height="1" fill="#000"/><rect x="1" y="11" width="7" height="1" fill="#000"/><rect x="10" y="11" width="1" height="1" fill="#000"/><rect x="11" y="11" width="2" height="1" fill="#ffff00"/><rect x="13" y="11" width="1" height="1" fill="#000"/><rect x="14" y="11" width="1" height="1" fill="#ffff00"/><rect x="15" y="11" width="1" height="1" fill="#808000"/><rect x="16" y="11" width="1" height="1" fill="#000"/><rect x="1" y="12" width="1" height="1" fill="#000"/><rect x="2" y="12" width="5" height="1" fill="#ffff00"/><rect x="7" y="12" width="1" height="1" fill="#000"/><rect x="10" y="12" width="1" height="1" fill="#000"/><rect x="11" y="12" width="4" height="1" fill="#ffff00"/><rect x="15" y="12" width="1" height="1" fill="#808000"/><rect x="16" y="12" width="1" height="1" fill="#000"/><rect x="1" y="13" width="1" height="1" fill="#000"/><rect x="2" y="13" width="2" height="1" fill="#ffff00"/><rect x="4" y="13" width="1" height="1" fill="#000"/><rect x="5" y="13" width="1" height="1" fill="#808000"/><rect x="6" y="13" width="1" height="1" fill="#ffff00"/><rect x="7" y="13" width="1" height="1" fill="#000"/><rect x="10" y="13" width="1" height="1" fill="#000"/><rect x="11" y="13" width="2" height="1" fill="#ffff00"/><rect x="13" y="13" width="1" height="1" fill="#000"/><rect x="14" y="13" width="1" height="1" fill="#ffff00"/><rect x="15" y="13" width="1" height="1" fill="#808000"/><rect x="16" y="13" width="1" height="1" fill="#000"/><rect x="1" y="14" width="1" height="1" fill="#000"/><rect x="2" y="14" width="5" height="1" fill="#ffff00"/><rect x="7" y="14" width="1" height="1" fill="#000"/><rect x="10" y="14" width="1" height="1" fill="#000"/><rect x="11" y="14" width="4" height="1" fill="#ffff00"/><rect x="15" y="14" width="1" height="1" fill="#808000"/><rect x="16" y="14" width="1" height="1" fill="#000"/><rect x="1" y="15" width="1" height="1" fill="#000"/><rect x="2" y="15" width="5" height="1" fill="#ffff00"/><rect x="7" y="15" width="1" height="1" fill="#000"/><rect x="10" y="15" width="1" height="1" fill="#000"/><rect x="11" y="15" width="4" height="1" fill="#ffff00"/><rect x="15" y="15" width="1" height="1" fill="#808000"/><rect x="16" y="15" width="1" height="1" fill="#000"/><rect x="1" y="16" width="7" height="1" fill="#000"/><rect x="10" y="16" width="7" height="1" fill="#000"/></svg>
<svg style="left:283px;top:47px" width="20" height="19" viewBox="0 0 20 19" shape-rendering="crispEdges"><rect x="1" y="0" width="2" height="1" fill="#ff0000"/><rect x="0" y="1" width="1" height="1" fill="#ff0000"/><rect x="1" y="1" width="2" height="1" fill="#ffff00"/><rect x="3" y="1" width="1" height="1" fill="#ff0000"/><rect x="0" y="2" width="1" height="1" fill="#ff0000"/><rect x="1" y="2" width="3" height="1" fill="#ffff00"/><rect x="4" y="2" width="1" height="1" fill="#ff0000"/><rect x="1" y="3" width="1" height="1" fill="#ff0000"/><rect x="2" y="3" width="3" height="1" fill="#ffff00"/><rect x="5" y="3" width="1" height="1" fill="#ff0000"/><rect x="2" y="4" width="1" height="1" fill="#ff0000"/><rect x="3" y="4" width="3" height="1" fill="#ffff00"/><rect x="6" y="4" width="1" height="1" fill="#ff0000"/><rect x="2" y="5" width="1" height="1" fill="#000"/><rect x="3" y="5" width="1" height="1" fill="#ff0000"/><rect x="4" y="5" width="3" height="1" fill="#ffff00"/><rect x="7" y="5" width="1" height="1" fill="#ff0000"/><rect x="8" y="5" width="1" height="1" fill="#000"/><rect x="9" y="5" width="1" height="1" fill="#ffff00"/><rect x="2" y="6" width="1" height="1" fill="#000"/><rect x="3" y="6" width="1" height="1" fill="#fff"/><rect x="4" y="6" width="1" height="1" fill="#ff0000"/><rect x="5" y="6" width="5" height="1" fill="#ffff00"/><rect x="10" y="6" width="2" height="1" fill="#000"/><rect x="2" y="7" width="1" height="1" fill="#000"/><rect x="3" y="7" width="2" height="1" fill="#fff"/><rect x="5" y="7" width="1" height="1" fill="#ff0000"/><rect x="6" y="7" width="4" height="1" fill="#ffff00"/><rect x="10" y="7" width="1" height="1" fill="#fff"/><rect x="11" y="7" width="1" height="1" fill="#000"/><rect x="2" y="8" width="1" height="1" fill="#000"/><rect x="3" y="8" width="2" height="1" fill="#fff"/><rect x="5" y="8" width="5" height="1" fill="#ffff00"/><rect x="10" y="8" width="1" height="1" fill="#fff"/><rect x="11" y="8" width="1" height="1" fill="#000"/><rect x="2" y="9" width="1" height="1" fill="#000"/><rect x="3" y="9" width="1" height="1" fill="#fff"/><rect x="4" y="9" width="6" height="1" fill="#ff0000"/><rect x="10" y="9" width="1" height="1" fill="#fff"/><rect x="11" y="9" width="1" height="1" fill="#000"/><rect x="2" y="10" width="1" height="1" fill="#000"/><rect x="3" y="10" width="8" height="1" fill="#fff"/><rect x="11" y="10" width="1" height="1" fill="#000"/><rect x="2" y="11" width="1" height="1" fill="#000"/><rect x="3" y="11" width="1" height="1" fill="#fff"/><rect x="4" y="11" width="6" height="1" fill="#a0a0a0"/><rect x="10" y="11" width="1" height="1" fill="#fff"/><rect x="11" y="11" width="1" height="1" fill="#000"/><rect x="12" y="11" width="1" height="1" fill="#00e000"/><rect x="2" y="12" width="1" height="1" fill="#000"/><rect x="3" y="12" width="8" height="1" fill="#fff"/><rect x="11" y="12" width="1" height="1" fill="#000"/><rect x="12" y="12" width="2" height="1" fill="#00e000"/><rect x="2" y="13" width="1" height="1" fill="#000"/><rect x="3" y="13" width="1" height="1" fill="#fff"/><rect x="4" y="13" width="6" height="1" fill="#a0a0a0"/><rect x="10" y="13" width="1" height="1" fill="#fff"/><rect x="11" y="13" width="1" height="1" fill="#000"/><rect x="12" y="13" width="3" height="1" fill="#00e000"/><rect x="18" y="13" width="1" height="1" fill="#00e000"/><rect x="2" y="14" width="1" height="1" fill="#000"/><rect x="3" y="14" width="8" height="1" fill="#fff"/><rect x="11" y="14" width="1" height="1" fill="#000"/><rect x="12" y="14" width="1" height="1" fill="#008000"/><rect x="13" y="14" width="3" height="1" fill="#00e000"/><rect x="17" y="14" width="2" height="1" fill="#00e000"/><rect x="2" y="15" width="10" height="1" fill="#000"/><rect x="13" y="15" width="1" height="1" fill="#008000"/><rect x="14" y="15" width="5" height="1" fill="#00e000"/><rect x="14" y="16" width="1" height="1" fill="#008000"/><rect x="15" y="16" width="4" height="1" fill="#00e000"/><rect x="13" y="17" width="6" height="1" fill="#00e000"/><rect x="12" y="18" width="7" height="1" fill="#008000"/></svg>
<svg style="left:314px;top:51px" width="18" height="14" viewBox="0 0 18 14" shape-rendering="crispEdges"><rect x="6" y="0" width="2" height="1" fill="#800000"/><rect x="16" y="0" width="1" height="1" fill="#800000"/><rect x="5" y="1" width="4" height="1" fill="#800000"/><rect x="15" y="1" width="2" height="1" fill="#800000"/><rect x="4" y="2" width="2" height="1" fill="#800000"/><rect x="8" y="2" width="2" height="1" fill="#800000"/><rect x="14" y="2" width="2" height="1" fill="#800000"/><rect x="3" y="3" width="2" height="1" fill="#800000"/><rect x="9" y="3" width="2" height="1" fill="#800000"/><rect x="13" y="3" width="2" height="1" fill="#800000"/><rect x="2" y="4" width="2" height="1" fill="#800000"/><rect x="10" y="4" width="4" height="1" fill="#800000"/><rect x="1" y="5" width="2" height="1" fill="#800000"/><rect x="11" y="5" width="2" height="1" fill="#800000"/><rect x="0" y="6" width="2" height="1" fill="#800000"/><rect x="7" y="6" width="2" height="1" fill="#000080"/><rect x="16" y="6" width="1" height="1" fill="#000080"/><rect x="0" y="7" width="1" height="1" fill="#800000"/><rect x="6" y="7" width="4" height="1" fill="#000080"/><rect x="15" y="7" width="2" height="1" fill="#000080"/><rect x="5" y="8" width="2" height="1" fill="#000080"/><rect x="9" y="8" width="2" height="1" fill="#000080"/><rect x="14" y="8" width="2" height="1" fill="#000080"/><rect x="4" y="9" width="2" height="1" fill="#000080"/><rect x="10" y="9" width="2" height="1" fill="#000080"/><rect x="13" y="9" width="2" height="1" fill="#000080"/><rect x="3" y="10" width="2" height="1" fill="#000080"/><rect x="11" y="10" width="3" height="1" fill="#000080"/><rect x="2" y="11" width="2" height="1" fill="#000080"/><rect x="12" y="11" width="1" height="1" fill="#000080"/><rect x="1" y="12" width="2" height="1" fill="#000080"/><rect x="0" y="13" width="2" height="1" fill="#000080"/></svg>
<svg style="left:344px;top:48px" width="20" height="19" viewBox="0 0 20 19" shape-rendering="crispEdges"><rect x="2" y="0" width="13" height="1" fill="#000"/><rect x="2" y="1" width="1" height="1" fill="#000"/><rect x="3" y="1" width="11" height="1" fill="#fff"/><rect x="14" y="1" width="1" height="1" fill="#000"/><rect x="2" y="2" width="1" height="1" fill="#000"/><rect x="3" y="2" width="7" height="1" fill="#fff"/><rect x="10" y="2" width="6" height="1" fill="#000"/><rect x="2" y="3" width="1" height="1" fill="#000"/><rect x="3" y="3" width="2" height="1" fill="#fff"/><rect x="5" y="3" width="4" height="1" fill="#0000ff"/><rect x="9" y="3" width="1" height="1" fill="#000"/><rect x="10" y="3" width="2" height="1" fill="#fff"/><rect x="12" y="3" width="2" height="1" fill="#0000ff"/><rect x="14" y="3" width="2" height="1" fill="#fff"/><rect x="16" y="3" width="1" height="1" fill="#000"/><rect x="2" y="4" width="1" height="1" fill="#000"/><rect x="3" y="4" width="5" height="1" fill="#fff"/><rect x="8" y="4" width="1" height="1" fill="#000"/><rect x="9" y="4" width="1" height="1" fill="#fff"/><rect x="10" y="4" width="5" height="1" fill="#0000ff"/><rect x="15" y="4" width="2" height="1" fill="#fff"/><rect x="17" y="4" width="1" height="1" fill="#000"/><rect x="2" y="5" width="1" height="1" fill="#000"/><rect x="3" y="5" width="2" height="1" fill="#fff"/><rect x="5" y="5" width="3" height="1" fill="#0000ff"/><rect x="8" y="5" width="1" height="1" fill="#000"/><rect x="9" y="5" width="1" height="1" fill="#fff"/><rect x="10" y="5" width="2" height="1" fill="#0000ff"/><rect x="12" y="5" width="5" height="1" fill="#fff"/><rect x="17" y="5" width="1" height="1" fill="#000"/><rect x="2" y="6" width="1" height="1" fill="#000"/><rect x="3" y="6" width="5" height="1" fill="#fff"/><rect x="8" y="6" width="1" height="1" fill="#000"/><rect x="9" y="6" width="6" height="1" fill="#0000ff"/><rect x="15" y="6" width="2" height="1" fill="#fff"/><rect x="17" y="6" width="1" height="1" fill="#000"/><rect x="2" y="7" width="1" height="1" fill="#000"/><rect x="3" y="7" width="2" height="1" fill="#fff"/><rect x="5" y="7" width="3" height="1" fill="#0000ff"/><rect x="8" y="7" width="1" height="1" fill="#000"/><rect x="9" y="7" width="1" height="1" fill="#fff"/><rect x="10" y="7" width="2" height="1" fill="#0000ff"/><rect x="12" y="7" width="5" height="1" fill="#fff"/><rect x="17" y="7" width="1" height="1" fill="#000"/><rect x="2" y="8" width="1" height="1" fill="#000"/><rect x="3" y="8" width="5" height="1" fill="#fff"/><rect x="8" y="8" width="1" height="1" fill="#000"/><rect x="9" y="8" width="1" height="1" fill="#fff"/><rect x="10" y="8" width="5" height="1" fill="#0000ff"/><rect x="15" y="8" width="2" height="1" fill="#fff"/><rect x="17" y="8" width="1" height="1" fill="#000"/><rect x="2" y="9" width="1" height="1" fill="#000"/><rect x="3" y="9" width="2" height="1" fill="#fff"/><rect x="5" y="9" width="3" height="1" fill="#0000ff"/><rect x="8" y="9" width="1" height="1" fill="#808000"/><rect x="9" y="9" width="1" height="1" fill="#000"/><rect x="10" y="9" width="2" height="1" fill="#fff"/><rect x="12" y="9" width="2" height="1" fill="#0000ff"/><rect x="14" y="9" width="2" height="1" fill="#fff"/><rect x="16" y="9" width="1" height="1" fill="#000"/><rect x="2" y="10" width="1" height="1" fill="#000"/><rect x="3" y="10" width="4" height="1" fill="#fff"/><rect x="7" y="10" width="2" height="1" fill="#808000"/><rect x="9" y="10" width="7" height="1" fill="#000"/><rect x="2" y="11" width="1" height="1" fill="#000"/><rect x="3" y="11" width="2" height="1" fill="#fff"/><rect x="5" y="11" width="1" height="1" fill="#0000ff"/><rect x="6" y="11" width="2" height="1" fill="#808000"/><rect x="8" y="11" width="1" height="1" fill="#000"/><rect x="9" y="11" width="6" height="1" fill="#fff"/><rect x="15" y="11" width="1" height="1" fill="#000"/><rect x="2" y="12" width="1" height="1" fill="#000"/><rect x="3" y="12" width="1" height="1" fill="#fff"/><rect x="4" y="12" width="1" height="1" fill="#ff0000"/><rect x="5" y="12" width="2" height="1" fill="#808000"/><rect x="7" y="12" width="7" height="1" fill="#fff"/><rect x="14" y="12" width="1" height="1" fill="#000"/><rect x="1" y="13" width="1" height="1" fill="#000"/><rect x="2" y="13" width="1" height="1" fill="#ffff00"/><rect x="3" y="13" width="1" height="1" fill="#ff0000"/><rect x="4" y="13" width="1" height="1" fill="#808000"/><rect x="5" y="13" width="8" height="1" fill="#0000ff"/><rect x="13" y="13" width="1" height="1" fill="#fff"/><rect x="14" y="13" width="1" height="1" fill="#000"/><rect x="0" y="14" width="1" height="1" fill="#000"/><rect x="1" y="14" width="2" height="1" fill="#ffff00"/><rect x="3" y="14" width="1" height="1" fill="#000"/><rect x="4" y="14" width="10" height="1" fill="#fff"/><rect x="14" y="14" width="1" height="1" fill="#000"/><rect x="1" y="15" width="3" height="1" fill="#000"/><rect x="4" y="15" width="10" height="1" fill="#fff"/><rect x="14" y="15" width="1" height="1" fill="#000"/><rect x="2" y="16" width="1" height="1" fill="#000"/><rect x="3" y="16" width="11" height="1" fill="#fff"/><rect x="14" y="16" width="1" height="1" fill="#000"/><rect x="2" y="17" width="1" height="1" fill="#000"/><rect x="3" y="17" width="11" height="1" fill="#fff"/><rect x="14" y="17" width="1" height="1" fill="#000"/><rect x="2" y="18" width="13" height="1" fill="#000"/></svg>
<svg style="left:368px;top:48px" width="16" height="19" viewBox="0 0 16 19" shape-rendering="crispEdges"><rect x="2" y="0" width="14" height="1" fill="#000"/><rect x="2" y="1" width="1" height="1" fill="#000"/><rect x="3" y="1" width="12" height="1" fill="#fff"/><rect x="15" y="1" width="1" height="1" fill="#000"/><rect x="2" y="2" width="1" height="1" fill="#000"/><rect x="3" y="2" width="12" height="1" fill="#fff"/><rect x="15" y="2" width="1" height="1" fill="#000"/><rect x="2" y="3" width="1" height="1" fill="#000"/><rect x="3" y="3" width="12" height="1" fill="#fff"/><rect x="15" y="3" width="1" height="1" fill="#000"/><rect x="2" y="4" width="1" height="1" fill="#000"/><rect x="3" y="4" width="1" height="1" fill="#fff"/><rect x="4" y="4" width="10" height="1" fill="#0000ff"/><rect x="14" y="4" width="1" height="1" fill="#fff"/><rect x="15" y="4" width="1" height="1" fill="#000"/><rect x="2" y="5" width="1" height="1" fill="#000"/><rect x="3" y="5" width="12" height="1" fill="#fff"/><rect x="15" y="5" width="1" height="1" fill="#000"/><rect x="2" y="6" width="1" height="1" fill="#000"/><rect x="3" y="6" width="10" height="1" fill="#fff"/><rect x="13" y="6" width="2" height="1" fill="#ff0000"/><rect x="15" y="6" width="1" height="1" fill="#000"/><rect x="2" y="7" width="1" height="1" fill="#000"/><rect x="3" y="7" width="1" height="1" fill="#fff"/><rect x="4" y="7" width="8" height="1" fill="#0000ff"/><rect x="12" y="7" width="2" height="1" fill="#ffff00"/><rect x="14" y="7" width="2" height="1" fill="#ff0000"/><rect x="2" y="8" width="1" height="1" fill="#000"/><rect x="3" y="8" width="8" height="1" fill="#fff"/><rect x="11" y="8" width="1" height="1" fill="#ff0000"/><rect x="12" y="8" width="2" height="1" fill="#ffff00"/><rect x="14" y="8" width="1" height="1" fill="#ff0000"/><rect x="15" y="8" width="1" height="1" fill="#000"/><rect x="2" y="9" width="1" height="1" fill="#000"/><rect x="3" y="9" width="1" height="1" fill="#fff"/><rect x="4" y="9" width="6" height="1" fill="#0000ff"/><rect x="10" y="9" width="3" height="1" fill="#ff0000"/><rect x="13" y="9" width="1" height="1" fill="#ffff00"/><rect x="14" y="9" width="1" height="1" fill="#c0c0c0"/><rect x="15" y="9" width="1" height="1" fill="#000"/><rect x="2" y="10" width="1" height="1" fill="#000"/><rect x="3" y="10" width="6" height="1" fill="#fff"/><rect x="9" y="10" width="3" height="1" fill="#ff0000"/><rect x="12" y="10" width="1" height="1" fill="#800000"/><rect x="13" y="10" width="1" height="1" fill="#000"/><rect x="14" y="10" width="1" height="1" fill="#fff"/><rect x="15" y="10" width="1" height="1" fill="#000"/><rect x="2" y="11" width="1" height="1" fill="#000"/><rect x="3" y="11" width="1" height="1" fill="#fff"/><rect x="4" y="11" width="4" height="1" fill="#0000ff"/><rect x="8" y="11" width="3" height="1" fill="#ff0000"/><rect x="11" y="11" width="1" height="1" fill="#800000"/><rect x="12" y="11" width="1" height="1" fill="#000"/><rect x="13" y="11" width="1" height="1" fill="#0000ff"/><rect x="14" y="11" width="1" height="1" fill="#fff"/><rect x="15" y="11" width="1" height="1" fill="#000"/><rect x="2" y="12" width="1" height="1" fill="#000"/><rect x="3" y="12" width="4" height="1" fill="#fff"/><rect x="7" y="12" width="3" height="1" fill="#ff0000"/><rect x="10" y="12" width="1" height="1" fill="#800000"/><rect x="11" y="12" width="1" height="1" fill="#000"/><rect x="12" y="12" width="1" height="1" fill="#c0c0c0"/><rect x="13" y="12" width="2" height="1" fill="#fff"/><rect x="15" y="12" width="1" height="1" fill="#000"/><rect x="2" y="13" width="1" height="1" fill="#000"/><rect x="3" y="13" width="1" height="1" fill="#fff"/><rect x="4" y="13" width="2" height="1" fill="#0000ff"/><rect x="6" y="13" width="3" height="1" fill="#ff0000"/><rect x="9" y="13" width="1" height="1" fill="#800000"/><rect x="10" y="13" width="1" height="1" fill="#000"/><rect x="11" y="13" width="3" height="1" fill="#0000ff"/><rect x="14" y="13" width="1" height="1" fill="#fff"/><rect x="15" y="13" width="1" height="1" fill="#000"/><rect x="2" y="14" width="1" height="1" fill="#000"/><rect x="3" y="14" width="2" height="1" fill="#fff"/><rect x="5" y="14" width="3" height="1" fill="#ff0000"/><rect x="8" y="14" width="1" height="1" fill="#800000"/><rect x="9" y="14" width="1" height="1" fill="#000"/><rect x="10" y="14" width="1" height="1" fill="#c0c0c0"/><rect x="11" y="14" width="4" height="1" fill="#fff"/><rect x="15" y="14" width="1" height="1" fill="#000"/><rect x="2" y="15" width="1" height="1" fill="#000"/><rect x="3" y="15" width="1" height="1" fill="#fff"/><rect x="4" y="15" width="3" height="1" fill="#ff0000"/><rect x="7" y="15" width="1" height="1" fill="#800000"/><rect x="8" y="15" width="1" height="1" fill="#000"/><rect x="9" y="15" width="5" height="1" fill="#0000ff"/><rect x="14" y="15" width="1" height="1" fill="#fff"/><rect x="15" y="15" width="1" height="1" fill="#000"/><rect x="1" y="16" width="2" height="1" fill="#ff0000"/><rect x="3" y="16" width="2" height="1" fill="#ffff00"/><rect x="5" y="16" width="1" height="1" fill="#ff0000"/><rect x="6" y="16" width="1" height="1" fill="#800000"/><rect x="7" y="16" width="1" height="1" fill="#000"/><rect x="8" y="16" width="1" height="1" fill="#c0c0c0"/><rect x="9" y="16" width="6" height="1" fill="#fff"/><rect x="15" y="16" width="1" height="1" fill="#000"/><rect x="1" y="17" width="1" height="1" fill="#ff0000"/><rect x="2" y="17" width="3" height="1" fill="#ffff00"/><rect x="5" y="17" width="1" height="1" fill="#800000"/><rect x="6" y="17" width="1" height="1" fill="#000"/><rect x="7" y="17" width="8" height="1" fill="#fff"/><rect x="15" y="17" width="1" height="1" fill="#000"/><rect x="1" y="18" width="4" height="1" fill="#ff0000"/><rect x="5" y="18" width="11" height="1" fill="#000"/></svg>
<svg style="left:398px;top:51px" width="19" height="15" viewBox="0 0 19 15" shape-rendering="crispEdges"><rect x="0" y="0" width="18" height="1" fill="#000"/><rect x="0" y="1" width="1" height="1" fill="#000"/><rect x="1" y="1" width="16" height="1" fill="#fff"/><rect x="17" y="1" width="1" height="1" fill="#000"/><rect x="18" y="1" width="1" height="1" fill="#808080"/><rect x="0" y="2" width="1" height="1" fill="#000"/><rect x="1" y="2" width="3" height="1" fill="#fff"/><rect x="4" y="2" width="1" height="1" fill="#000"/><rect x="5" y="2" width="1" height="1" fill="#fff"/><rect x="6" y="2" width="1" height="1" fill="#000"/><rect x="7" y="2" width="1" height="1" fill="#fff"/><rect x="8" y="2" width="1" height="1" fill="#000"/><rect x="9" y="2" width="1" height="1" fill="#fff"/><rect x="10" y="2" width="1" height="1" fill="#000"/><rect x="11" y="2" width="1" height="1" fill="#fff"/><rect x="12" y="2" width="1" height="1" fill="#000"/><rect x="13" y="2" width="1" height="1" fill="#fff"/><rect x="14" y="2" width="1" height="1" fill="#000"/><rect x="15" y="2" width="2" height="1" fill="#fff"/><rect x="17" y="2" width="1" height="1" fill="#000"/><rect x="18" y="2" width="1" height="1" fill="#808080"/><rect x="0" y="3" width="1" height="1" fill="#000"/><rect x="1" y="3" width="16" height="1" fill="#fff"/><rect x="17" y="3" width="1" height="1" fill="#000"/><rect x="18" y="3" width="1" height="1" fill="#808080"/><rect x="0" y="4" width="1" height="1" fill="#000"/><rect x="1" y="4" width="1" height="1" fill="#fff"/><rect x="2" y="4" width="1" height="1" fill="#ff0000"/><rect x="3" y="4" width="1" height="1" fill="#fff"/><rect x="4" y="4" width="6" height="1" fill="#0000ff"/><rect x="10" y="4" width="7" height="1" fill="#fff"/><rect x="17" y="4" width="1" height="1" fill="#000"/><rect x="18" y="4" width="1" height="1" fill="#808080"/><rect x="0" y="5" width="1" height="1" fill="#000"/><rect x="1" y="5" width="3" height="1" fill="#fff"/><rect x="4" y="5" width="6" height="1" fill="#0000ff"/><rect x="10" y="5" width="7" height="1" fill="#fff"/><rect x="17" y="5" width="1" height="1" fill="#000"/><rect x="18" y="5" width="1" height="1" fill="#808080"/><rect x="0" y="6" width="1" height="1" fill="#000"/><rect x="1" y="6" width="8" height="1" fill="#fff"/><rect x="9" y="6" width="1" height="1" fill="#c0c0c0"/><rect x="10" y="6" width="7" height="1" fill="#fff"/><rect x="17" y="6" width="1" height="1" fill="#000"/><rect x="18" y="6" width="1" height="1" fill="#808080"/><rect x="0" y="7" width="1" height="1" fill="#000"/><rect x="1" y="7" width="1" height="1" fill="#fff"/><rect x="2" y="7" width="1" height="1" fill="#ff0000"/><rect x="3" y="7" width="3" height="1" fill="#fff"/><rect x="6" y="7" width="7" height="1" fill="#0000ff"/><rect x="13" y="7" width="4" height="1" fill="#fff"/><rect x="17" y="7" width="1" height="1" fill="#000"/><rect x="18" y="7" width="1" height="1" fill="#808080"/><rect x="0" y="8" width="1" height="1" fill="#000"/><rect x="1" y="8" width="5" height="1" fill="#fff"/><rect x="6" y="8" width="7" height="1" fill="#0000ff"/><rect x="13" y="8" width="4" height="1" fill="#fff"/><rect x="17" y="8" width="1" height="1" fill="#000"/><rect x="18" y="8" width="1" height="1" fill="#808080"/><rect x="0" y="9" width="1" height="1" fill="#000"/><rect x="1" y="9" width="11" height="1" fill="#fff"/><rect x="12" y="9" width="1" height="1" fill="#c0c0c0"/><rect x="13" y="9" width="4" height="1" fill="#fff"/><rect x="17" y="9" width="1" height="1" fill="#000"/><rect x="18" y="9" width="1" height="1" fill="#808080"/><rect x="0" y="10" width="1" height="1" fill="#000"/><rect x="1" y="10" width="1" height="1" fill="#fff"/><rect x="2" y="10" width="1" height="1" fill="#ff0000"/><rect x="3" y="10" width="3" height="1" fill="#fff"/><rect x="6" y="10" width="10" height="1" fill="#0000ff"/><rect x="16" y="10" width="1" height="1" fill="#fff"/><rect x="17" y="10" width="1" height="1" fill="#000"/><rect x="18" y="10" width="1" height="1" fill="#808080"/><rect x="0" y="11" width="1" height="1" fill="#000"/><rect x="1" y="11" width="5" height="1" fill="#fff"/><rect x="6" y="11" width="10" height="1" fill="#0000ff"/><rect x="16" y="11" width="1" height="1" fill="#fff"/><rect x="17" y="11" width="1" height="1" fill="#000"/><rect x="18" y="11" width="1" height="1" fill="#808080"/><rect x="0" y="12" width="1" height="1" fill="#000"/><rect x="1" y="12" width="16" height="1" fill="#fff"/><rect x="17" y="12" width="1" height="1" fill="#000"/><rect x="18" y="12" width="1" height="1" fill="#808080"/><rect x="0" y="13" width="18" height="1" fill="#000"/><rect x="18" y="13" width="1" height="1" fill="#808080"/><rect x="1" y="14" width="18" height="1" fill="#808080"/></svg>
<svg style="left:422px;top:50px" width="18" height="15" viewBox="0 0 18 15" shape-rendering="crispEdges"><rect x="5" y="0" width="5" height="1" fill="#000"/><rect x="1" y="1" width="5" height="1" fill="#000"/><rect x="6" y="1" width="3" height="1" fill="#fff"/><rect x="9" y="1" width="8" height="1" fill="#000"/><rect x="0" y="2" width="1" height="1" fill="#000"/><rect x="1" y="2" width="1" height="1" fill="#fff"/><rect x="2" y="2" width="2" height="1" fill="#a0a0a0"/><rect x="4" y="2" width="1" height="1" fill="#000"/><rect x="5" y="2" width="5" height="1" fill="#fff"/><rect x="10" y="2" width="1" height="1" fill="#000"/><rect x="11" y="2" width="4" height="1" fill="#a0a0a0"/><rect x="15" y="2" width="2" height="1" fill="#fff"/><rect x="17" y="2" width="1" height="1" fill="#000"/><rect x="0" y="3" width="1" height="1" fill="#000"/><rect x="1" y="3" width="3" height="1" fill="#fff"/><rect x="4" y="3" width="7" height="1" fill="#000"/><rect x="11" y="3" width="6" height="1" fill="#fff"/><rect x="17" y="3" width="1" height="1" fill="#000"/><rect x="0" y="4" width="1" height="1" fill="#000"/><rect x="1" y="4" width="16" height="1" fill="#fff"/><rect x="17" y="4" width="1" height="1" fill="#000"/><rect x="0" y="5" width="1" height="1" fill="#000"/><rect x="1" y="5" width="16" height="1" fill="#fff"/><rect x="17" y="5" width="1" height="1" fill="#000"/><rect x="0" y="6" width="1" height="1" fill="#000"/><rect x="1" y="6" width="2" height="1" fill="#fff"/><rect x="3" y="6" width="12" height="1" fill="#000"/><rect x="15" y="6" width="2" height="1" fill="#fff"/><rect x="17" y="6" width="1" height="1" fill="#000"/><rect x="0" y="7" width="1" height="1" fill="#000"/><rect x="1" y="7" width="16" height="1" fill="#fff"/><rect x="17" y="7" width="1" height="1" fill="#000"/><rect x="0" y="8" width="1" height="1" fill="#000"/><rect x="1" y="8" width="2" height="1" fill="#fff"/><rect x="3" y="8" width="12" height="1" fill="#000"/><rect x="15" y="8" width="2" height="1" fill="#fff"/><rect x="17" y="8" width="1" height="1" fill="#000"/><rect x="0" y="9" width="1" height="1" fill="#000"/><rect x="1" y="9" width="16" height="1" fill="#fff"/><rect x="17" y="9" width="1" height="1" fill="#000"/><rect x="0" y="10" width="1" height="1" fill="#000"/><rect x="1" y="10" width="2" height="1" fill="#fff"/><rect x="3" y="10" width="12" height="1" fill="#000"/><rect x="15" y="10" width="2" height="1" fill="#fff"/><rect x="17" y="10" width="1" height="1" fill="#000"/><rect x="0" y="11" width="1" height="1" fill="#000"/><rect x="1" y="11" width="16" height="1" fill="#fff"/><rect x="17" y="11" width="1" height="1" fill="#000"/><rect x="0" y="12" width="1" height="1" fill="#000"/><rect x="1" y="12" width="16" height="1" fill="#fff"/><rect x="17" y="12" width="1" height="1" fill="#000"/><rect x="0" y="13" width="1" height="1" fill="#000"/><rect x="1" y="13" width="16" height="1" fill="#fff"/><rect x="17" y="13" width="1" height="1" fill="#000"/><rect x="1" y="14" width="16" height="1" fill="#000"/></svg>
<svg style="left:452px;top:49px" width="18" height="18" viewBox="0 0 18 18" shape-rendering="crispEdges"><rect x="0" y="0" width="6" height="1" fill="#000"/><rect x="0" y="1" width="1" height="1" fill="#000"/><rect x="1" y="1" width="4" height="1" fill="#fff"/><rect x="5" y="1" width="2" height="1" fill="#000"/><rect x="0" y="2" width="1" height="1" fill="#000"/><rect x="1" y="2" width="1" height="1" fill="#fff"/><rect x="2" y="2" width="2" height="1" fill="#000"/><rect x="4" y="2" width="1" height="1" fill="#fff"/><rect x="5" y="2" width="1" height="1" fill="#000"/><rect x="6" y="2" width="1" height="1" fill="#fff"/><rect x="7" y="2" width="1" height="1" fill="#000"/><rect x="9" y="2" width="4" height="1" fill="#800000"/><rect x="0" y="3" width="1" height="1" fill="#000"/><rect x="1" y="3" width="4" height="1" fill="#fff"/><rect x="5" y="3" width="4" height="1" fill="#000"/><rect x="11" y="3" width="2" height="1" fill="#800000"/><rect x="0" y="4" width="1" height="1" fill="#000"/><rect x="1" y="4" width="1" height="1" fill="#fff"/><rect x="2" y="4" width="3" height="1" fill="#000"/><rect x="5" y="4" width="3" height="1" fill="#fff"/><rect x="8" y="4" width="1" height="1" fill="#000"/><rect x="11" y="4" width="2" height="1" fill="#800000"/><rect x="0" y="5" width="1" height="1" fill="#000"/><rect x="1" y="5" width="7" height="1" fill="#fff"/><rect x="8" y="5" width="1" height="1" fill="#000"/><rect x="11" y="5" width="2" height="1" fill="#800000"/><rect x="0" y="6" width="1" height="1" fill="#000"/><rect x="1" y="6" width="1" height="1" fill="#fff"/><rect x="2" y="6" width="5" height="1" fill="#000"/><rect x="7" y="6" width="1" height="1" fill="#fff"/><rect x="8" y="6" width="1" height="1" fill="#000"/><rect x="9" y="6" width="6" height="1" fill="#800000"/><rect x="16" y="6" width="1" height="1" fill="#000"/><rect x="0" y="7" width="1" height="1" fill="#000"/><rect x="1" y="7" width="7" height="1" fill="#fff"/><rect x="8" y="7" width="1" height="1" fill="#000"/><rect x="9" y="7" width="1" height="1" fill="#008080"/><rect x="10" y="7" width="4" height="1" fill="#800000"/><rect x="14" y="7" width="2" height="1" fill="#008080"/><rect x="16" y="7" width="2" height="1" fill="#000"/><rect x="0" y="8" width="9" height="1" fill="#000"/><rect x="9" y="8" width="2" height="1" fill="#008080"/><rect x="11" y="8" width="2" height="1" fill="#800000"/><rect x="13" y="8" width="3" height="1" fill="#008080"/><rect x="16" y="8" width="2" height="1" fill="#000"/><rect x="2" y="9" width="1" height="1" fill="#00c0c0"/><rect x="3" y="9" width="1" height="1" fill="#000"/><rect x="4" y="9" width="12" height="1" fill="#008080"/><rect x="16" y="9" width="2" height="1" fill="#000"/><rect x="2" y="10" width="1" height="1" fill="#00c0c0"/><rect x="3" y="10" width="1" height="1" fill="#000"/><rect x="4" y="10" width="1" height="1" fill="#008080"/><rect x="5" y="10" width="1" height="1" fill="#fff"/><rect x="6" y="10" width="1" height="1" fill="#000"/><rect x="7" y="10" width="1" height="1" fill="#008080"/><rect x="8" y="10" width="1" height="1" fill="#fff"/><rect x="9" y="10" width="1" height="1" fill="#000"/><rect x="10" y="10" width="1" height="1" fill="#008080"/><rect x="11" y="10" width="1" height="1" fill="#fff"/><rect x="12" y="10" width="1" height="1" fill="#000"/><rect x="13" y="10" width="1" height="1" fill="#008080"/><rect x="14" y="10" width="1" height="1" fill="#fff"/><rect x="15" y="10" width="1" height="1" fill="#008080"/><rect x="16" y="10" width="2" height="1" fill="#000"/><rect x="2" y="11" width="1" height="1" fill="#00c0c0"/><rect x="3" y="11" width="1" height="1" fill="#000"/><rect x="4" y="11" width="12" height="1" fill="#008080"/><rect x="16" y="11" width="2" height="1" fill="#000"/><rect x="2" y="12" width="1" height="1" fill="#00c0c0"/><rect x="3" y="12" width="1" height="1" fill="#000"/><rect x="4" y="12" width="1" height="1" fill="#008080"/><rect x="5" y="12" width="1" height="1" fill="#fff"/><rect x="6" y="12" width="1" height="1" fill="#000"/><rect x="7" y="12" width="1" height="1" fill="#008080"/><rect x="8" y="12" width="1" height="1" fill="#fff"/><rect x="9" y="12" width="1" height="1" fill="#000"/><rect x="10" y="12" width="1" height="1" fill="#008080"/><rect x="11" y="12" width="1" height="1" fill="#fff"/><rect x="12" y="12" width="1" height="1" fill="#000"/><rect x="13" y="12" width="1" height="1" fill="#008080"/><rect x="14" y="12" width="1" height="1" fill="#fff"/><rect x="15" y="12" width="1" height="1" fill="#008080"/><rect x="16" y="12" width="2" height="1" fill="#000"/><rect x="2" y="13" width="1" height="1" fill="#00c0c0"/><rect x="3" y="13" width="1" height="1" fill="#000"/><rect x="4" y="13" width="12" height="1" fill="#008080"/><rect x="16" y="13" width="2" height="1" fill="#000"/><rect x="2" y="14" width="1" height="1" fill="#00c0c0"/><rect x="3" y="14" width="1" height="1" fill="#000"/><rect x="4" y="14" width="1" height="1" fill="#008080"/><rect x="5" y="14" width="1" height="1" fill="#fff"/><rect x="6" y="14" width="1" height="1" fill="#000"/><rect x="7" y="14" width="1" height="1" fill="#008080"/><rect x="8" y="14" width="1" height="1" fill="#fff"/><rect x="9" y="14" width="1" height="1" fill="#000"/><rect x="10" y="14" width="1" height="1" fill="#008080"/><rect x="11" y="14" width="1" height="1" fill="#fff"/><rect x="12" y="14" width="1" height="1" fill="#000"/><rect x="13" y="14" width="1" height="1" fill="#008080"/><rect x="14" y="14" width="1" height="1" fill="#fff"/><rect x="15" y="14" width="1" height="1" fill="#008080"/><rect x="16" y="14" width="2" height="1" fill="#000"/><rect x="2" y="15" width="1" height="1" fill="#00c0c0"/><rect x="3" y="15" width="1" height="1" fill="#000"/><rect x="4" y="15" width="12" height="1" fill="#008080"/><rect x="16" y="15" width="2" height="1" fill="#000"/><rect x="2" y="16" width="1" height="1" fill="#00c0c0"/><rect x="3" y="16" width="15" height="1" fill="#000"/><rect x="3" y="17" width="14" height="1" fill="#000"/></svg>
<div style="left:79px;top:46px;width:1px;height:24px;background:#aca899;"></div>
<div style="left:80px;top:46px;width:1px;height:24px;background:#fff;"></div>
<div style="left:136px;top:46px;width:1px;height:24px;background:#aca899;"></div>
<div style="left:137px;top:46px;width:1px;height:24px;background:#fff;"></div>
<div style="left:172px;top:46px;width:1px;height:24px;background:#aca899;"></div>
<div style="left:173px;top:46px;width:1px;height:24px;background:#fff;"></div>
<div style="left:253px;top:46px;width:1px;height:24px;background:#aca899;"></div>
<div style="left:254px;top:46px;width:1px;height:24px;background:#fff;"></div>
<div style="left:307px;top:46px;width:1px;height:24px;background:#aca899;"></div>
<div style="left:308px;top:46px;width:1px;height:24px;background:#fff;"></div>
<div style="left:337px;top:46px;width:1px;height:24px;background:#aca899;"></div>
<div style="left:338px;top:46px;width:1px;height:24px;background:#fff;"></div>
<div style="left:391px;top:46px;width:1px;height:24px;background:#aca899;"></div>
<div style="left:392px;top:46px;width:1px;height:24px;background:#fff;"></div>
<div style="left:445px;top:46px;width:1px;height:24px;background:#aca899;"></div>
<div style="left:446px;top:46px;width:1px;height:24px;background:#fff;"></div>
<span class="t" style="left:214.77px;top:60px;font-size:8px;line-height:8px;color:#000;font-family:'Liberation Sans',sans-serif;font-weight:bold;text-shadow:0 0 0 rgba(0,0,0,.3);transform:scaleX(0.9100);">CF</span>
</body></html>
